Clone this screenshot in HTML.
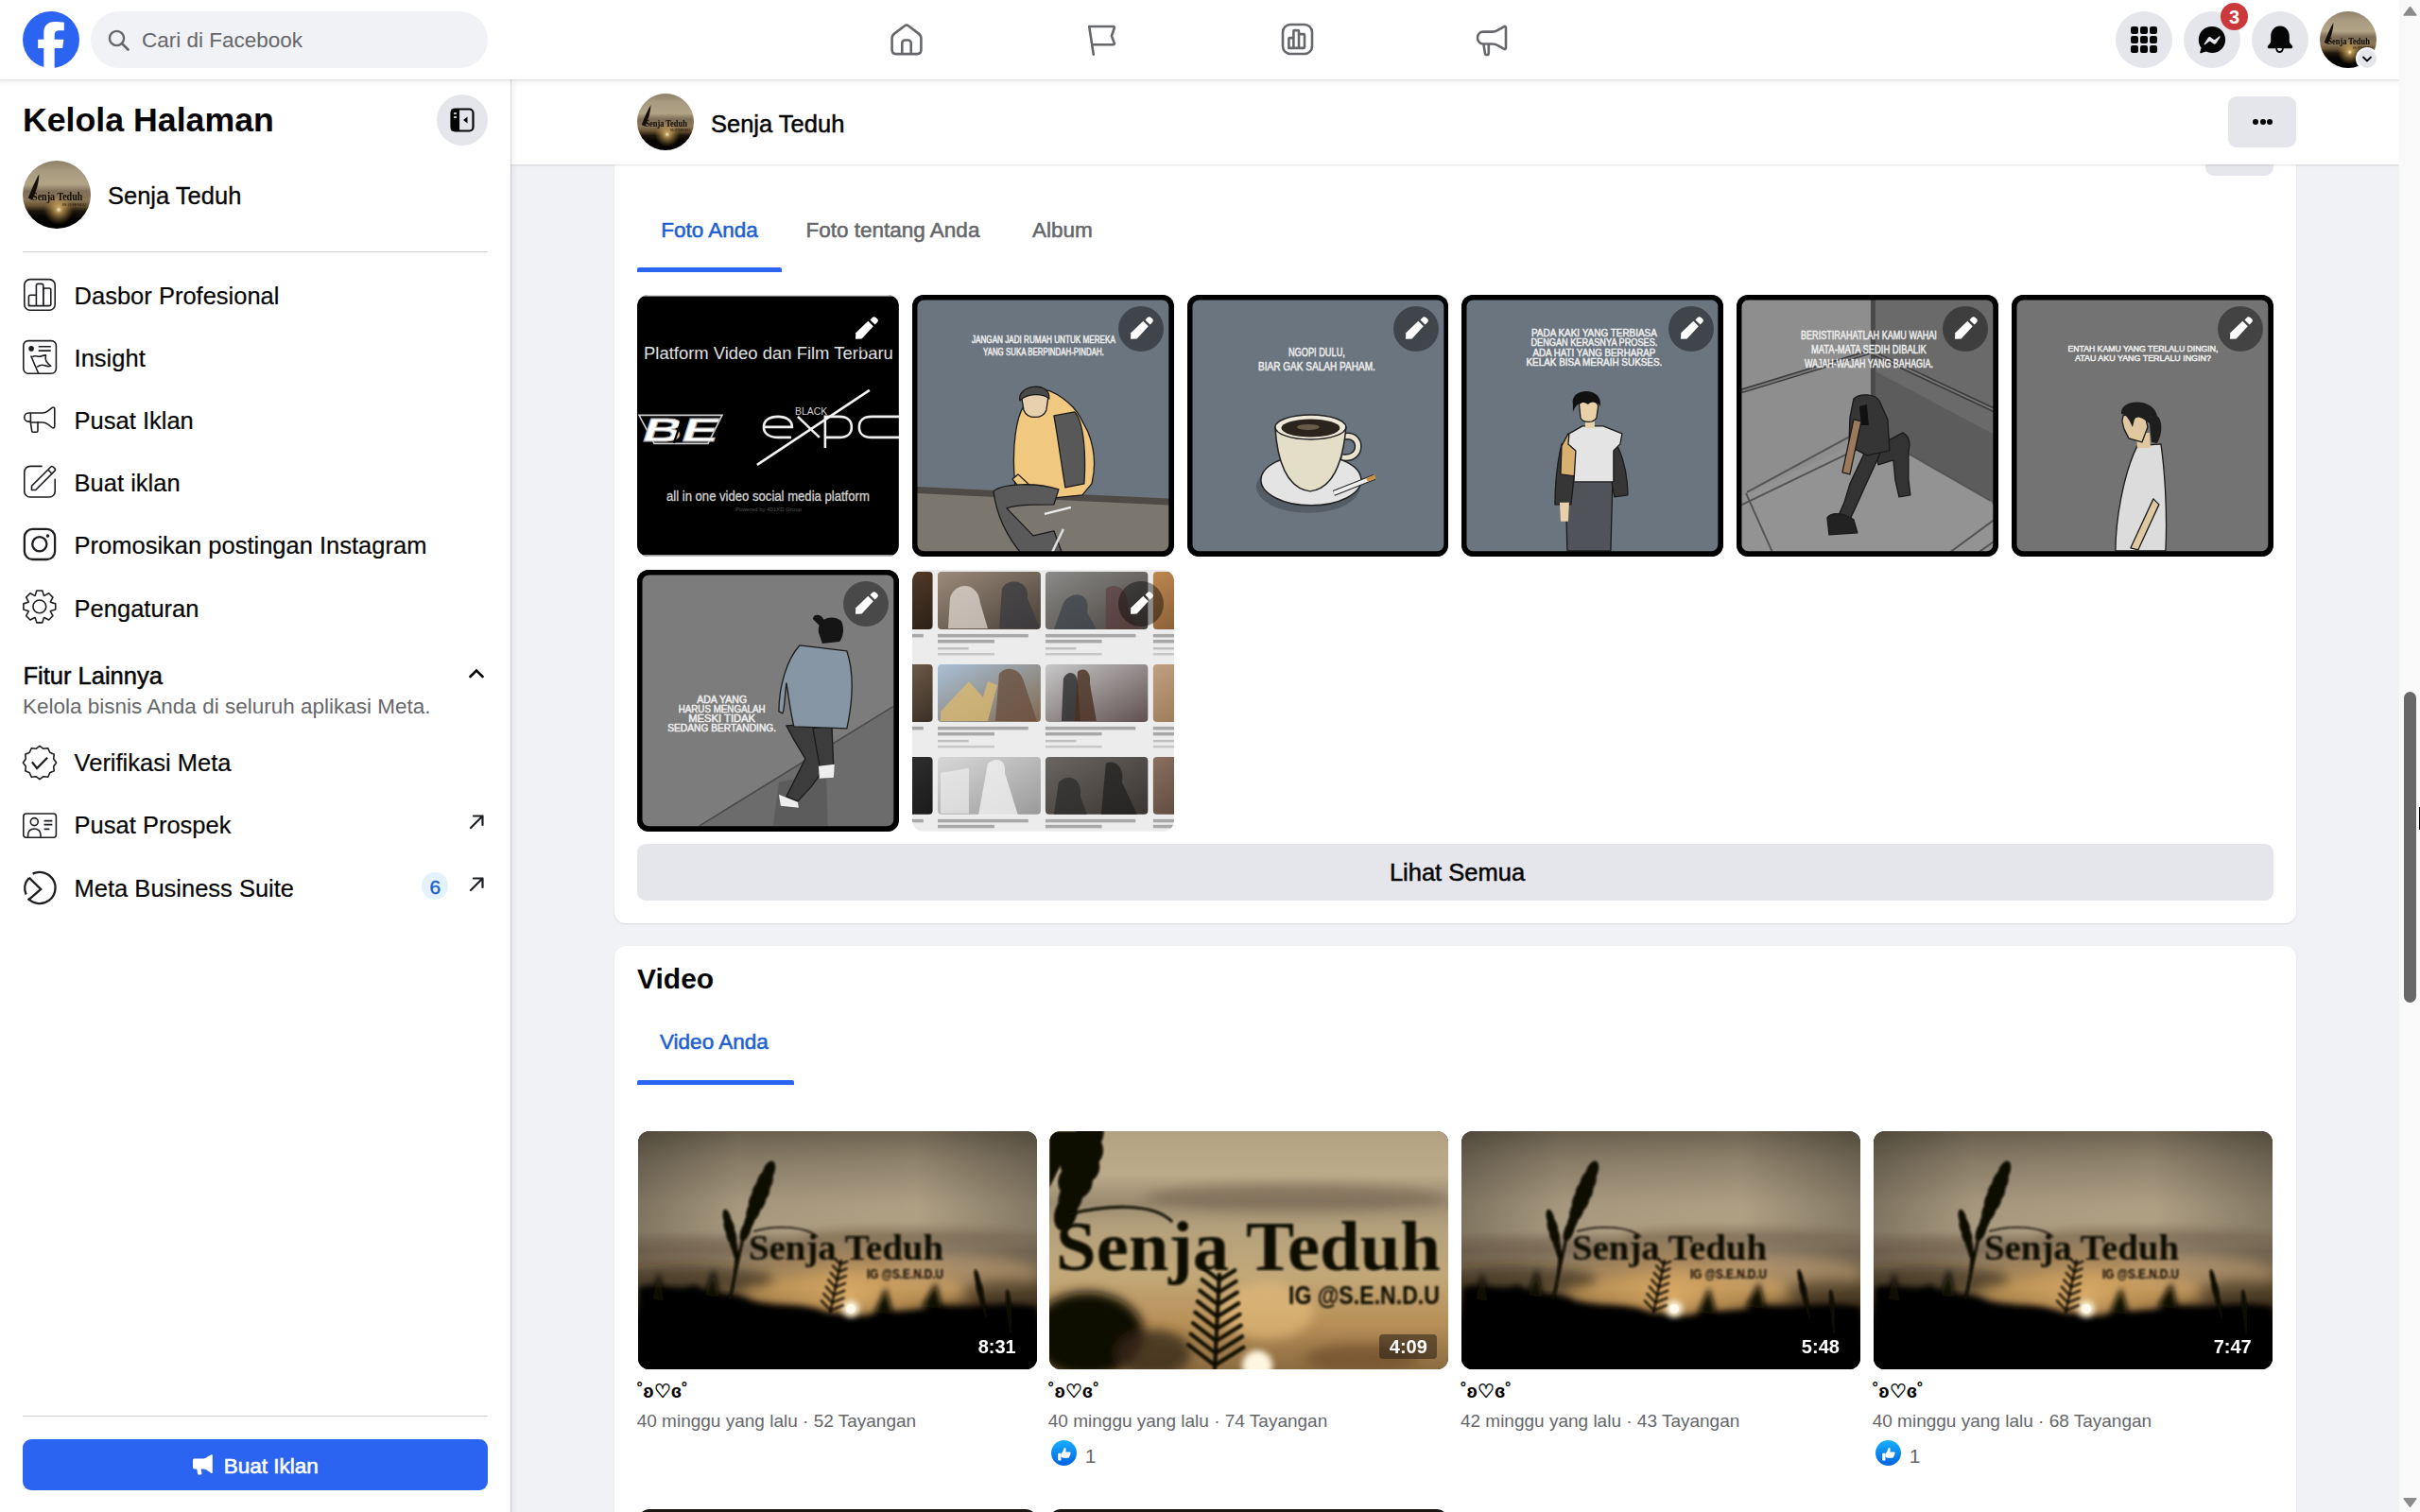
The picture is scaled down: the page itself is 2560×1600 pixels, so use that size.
<!DOCTYPE html><html><head><meta charset="utf-8"><title>Senja Teduh</title><style>
*{box-sizing:border-box;margin:0;padding:0}
html,body{width:2560px;height:1600px;overflow:hidden;background:#f0f2f5;font-family:"Liberation Sans",sans-serif;color:#050505}
.a{position:absolute}
.t{position:absolute;white-space:nowrap;line-height:1}
svg{position:absolute;overflow:visible}
</style></head><body>
<div class="a" style="left:650px;top:60px;width:1779px;height:917px;background:#fff;border-radius:12px;box-shadow:0 1px 2px rgba(0,0,0,.1)"></div>
<div class="a" style="left:650px;top:1001px;width:1779px;height:700px;background:#fff;border-radius:12px;box-shadow:0 1px 2px rgba(0,0,0,.1)"></div>
<div class="a" style="left:2333px;top:150px;width:72px;height:36px;border-radius:9px;background:#e4e6eb"></div>
<div class="t" style="left:699.20px;top:232.75px;font-size:22.5px;color:#1d5fd1;-webkit-text-stroke:0.55px #1d5fd1;">Foto Anda</div>
<div class="t" style="left:852.50px;top:232.75px;font-size:22.5px;color:#65676b;-webkit-text-stroke:0.55px #65676b;">Foto tentang Anda</div>
<div class="t" style="left:1092.00px;top:232.75px;font-size:22.5px;color:#65676b;-webkit-text-stroke:0.55px #65676b;">Album</div>
<div class="a" style="left:674px;top:283px;width:153px;height:5px;border-radius:2px 2px 0 0;background:#2c64f2"></div>
<div class="a" style="left:674.00px;top:312.30px;width:276.83px;height:276.83px;border-radius:12px;overflow:hidden"><svg style="left:0;top:0" width="276.83" height="276.83" viewBox="0 0 277 277"><rect width="277" height="277" fill="#000"/><rect x="0" y="0" width="277" height="1.5" fill="#ddd"/><rect x="0" y="275.5" width="277" height="1.5" fill="#ddd"/><text x="139" y="68" text-anchor="middle" font-family="Liberation Sans" font-size="17.5" fill="#e0e0e0" textLength="264" lengthAdjust="spacingAndGlyphs">Platform Video dan Film Terbaru</text><path d="M2 127.5 L90 127.5 L75 157.5 L18 157.5z" fill="none" stroke="#cfcfcf" stroke-width="1.6"/><text x="46" y="155" text-anchor="middle" font-family="Liberation Sans" font-weight="700" font-style="italic" font-size="36" fill="#fff" stroke="#aaa" stroke-width=".8" textLength="80" lengthAdjust="spacingAndGlyphs">BE</text><path d="M48 129 L39 157" stroke="#000" stroke-width="2.2"/><text x="167" y="127" font-family="Liberation Sans" font-size="10.5" fill="#cfcfcf">BLACK</text><g fill="none" stroke="#f0f0f0" stroke-width="2.6"><path d="M134 140 H164 C164 133 158 129 149 129 C140 129 134 133 134 140 C134 147 140 151 149 151 H163"/><path d="M170 129 L193 151"/><path d="M199 162 V129 H214 C222 129 227 133 227 140 C227 147 222 151 214 151 H199"/><path d="M290 129 H248 C240 129 235 133 235 140 C235 147 240 151 248 151 H290"/></g><path d="M127 180 L246 101" stroke="#f4f4f4" stroke-width="2.6"/><text x="138.5" y="218" text-anchor="middle" font-family="Liberation Sans" font-size="15" fill="#cfcfcf" stroke="#cfcfcf" stroke-width=".35" textLength="215" lengthAdjust="spacingAndGlyphs">all in one video social media platform</text><text x="139" y="229" text-anchor="middle" font-family="Liberation Sans" font-size="6" fill="#555">Powered by 401XD Group</text></svg><div class="a" style="right:10.8px;top:11.7px;width:48px;height:48px;border-radius:50%;background:rgba(0,0,0,.41)"><svg style="left:0;top:0" width="48" height="48" viewBox="0 0 48 48"><path d="M13 34.8L13.3 28.3 26.3 15.8 31.8 21.3 19.6 34.6z" fill="#fff"/><path d="M28.4 14.4L30.9 11.9C31.9 10.9 33.5 10.9 34.5 11.9L36.1 13.5C37.1 14.5 37.1 16.1 36.1 17.1L33.6 19.6z" fill="#fff"/></svg></div></div>
<div class="a" style="left:964.83px;top:312.30px;width:276.83px;height:276.83px;border-radius:12px;overflow:hidden"><svg style="left:0;top:0" width="276.83" height="276.83" viewBox="0 0 277 277"><rect width="277" height="277" fill="#6b7580"/><path d="M0 203 L277 216 L277 277 L0 277z" fill="#7b766e"/><path d="M0 203 L277 216 L277 223 L0 210z" fill="#4e4a46"/><text x="139" y="51.0" text-anchor="middle" font-family="Liberation Sans" font-weight="400" font-size="11" fill="#eeeeee" stroke="#eeeeee" stroke-width="0.5" textLength="152" lengthAdjust="spacingAndGlyphs">JANGAN JADI RUMAH UNTUK MEREKA</text><text x="139" y="64.5" text-anchor="middle" font-family="Liberation Sans" font-weight="400" font-size="11" fill="#eeeeee" stroke="#eeeeee" stroke-width="0.5" textLength="128" lengthAdjust="spacingAndGlyphs">YANG SUKA BERPINDAH-PINDAH.</text><path d="M118 118 C110 130 106 160 108 190 L110 215 L125 218 L138 210 L150 215 L180 212 L190 200 C195 180 192 160 186 145 L178 130 C170 115 150 100 135 100z" fill="#f0c880" stroke="#1a1a1a" stroke-width="1.3" stroke-linejoin="round"/><path d="M106 195 L120 212 L128 205 L112 190z" fill="#f0c880" stroke="#1a1a1a" stroke-width="1.3" stroke-linejoin="round"/><path d="M116 110 C116 96 140 92 144 108 L142 122 C138 132 122 132 118 122z" fill="#e6d0ae" stroke="#1a1a1a" stroke-width="1.3" stroke-linejoin="round"/><path d="M114 112 C110 96 146 90 145 110 C138 104 122 104 114 112z" fill="#4a4a4a" stroke="#1a1a1a" stroke-width="1.3" stroke-linejoin="round"/><path d="M150 128 L172 124 C182 135 184 170 182 200 L162 204 C158 180 154 150 150 128z" fill="#585858" stroke="#1a1a1a" stroke-width="1.3" stroke-linejoin="round"/><path d="M86 208 C95 200 130 198 155 206 L150 222 C130 222 110 222 100 226 L128 255 L150 250 L158 272 L140 277 L118 277 C105 262 90 240 86 208z" fill="#5a5a5a" stroke="#1a1a1a" stroke-width="1.3" stroke-linejoin="round"/><path d="M140 232 L168 225" stroke="#eee" stroke-width="2.5"/><path d="M146 277 L160 248" stroke="#ddd" stroke-width="2.5"/><rect x="2.5" y="2.5" width="272" height="272" rx="10" fill="none" stroke="#000" stroke-width="6"/></svg><div class="a" style="right:10.8px;top:11.7px;width:48px;height:48px;border-radius:50%;background:rgba(0,0,0,.41)"><svg style="left:0;top:0" width="48" height="48" viewBox="0 0 48 48"><path d="M13 34.8L13.3 28.3 26.3 15.8 31.8 21.3 19.6 34.6z" fill="#fff"/><path d="M28.4 14.4L30.9 11.9C31.9 10.9 33.5 10.9 34.5 11.9L36.1 13.5C37.1 14.5 37.1 16.1 36.1 17.1L33.6 19.6z" fill="#fff"/></svg></div></div>
<div class="a" style="left:1255.66px;top:312.30px;width:276.83px;height:276.83px;border-radius:12px;overflow:hidden"><svg style="left:0;top:0" width="276.83" height="276.83" viewBox="0 0 277 277"><rect width="277" height="277" fill="#6b7580"/><text x="137" y="65.0" text-anchor="middle" font-family="Liberation Sans" font-weight="400" font-size="12.5" fill="#eeeeee" stroke="#eeeeee" stroke-width="0.5" textLength="60" lengthAdjust="spacingAndGlyphs">NGOPI DULU,</text><text x="137" y="80.5" text-anchor="middle" font-family="Liberation Sans" font-weight="400" font-size="12.5" fill="#eeeeee" stroke="#eeeeee" stroke-width="0.5" textLength="124" lengthAdjust="spacingAndGlyphs">BIAR GAK SALAH PAHAM.</text><ellipse cx="128" cy="203" rx="55" ry="28" fill="#454c53" opacity=".6"/><ellipse cx="131" cy="196" rx="53" ry="27" fill="#e4e4e4" stroke="#222" stroke-width="1.5"/><path d="M166 150 C186 146 186 176 164 172" fill="none" stroke="#222" stroke-width="8"/><path d="M166 150 C186 146 186 176 164 172" fill="none" stroke="#e8e2d0" stroke-width="5"/><path d="M93 140 C95 175 105 205 130 208 C155 205 165 175 168 140z" fill="#e4ddc8" stroke="#222" stroke-width="1.5"/><ellipse cx="130.5" cy="140" rx="37.5" ry="13" fill="#efe9da" stroke="#222" stroke-width="1.5"/><ellipse cx="130.5" cy="141" rx="31" ry="9.5" fill="#2a241c"/><ellipse cx="128" cy="140" rx="12" ry="3" fill="#6a5a48"/><path d="M155 210 L198 193" stroke="#222" stroke-width="6"/><path d="M155 210 L198 193" stroke="#eee" stroke-width="4"/><path d="M190 196 L199 192.5" stroke="#c89040" stroke-width="4"/><rect x="2.5" y="2.5" width="272" height="272" rx="10" fill="none" stroke="#000" stroke-width="6"/></svg><div class="a" style="right:10.8px;top:11.7px;width:48px;height:48px;border-radius:50%;background:rgba(0,0,0,.41)"><svg style="left:0;top:0" width="48" height="48" viewBox="0 0 48 48"><path d="M13 34.8L13.3 28.3 26.3 15.8 31.8 21.3 19.6 34.6z" fill="#fff"/><path d="M28.4 14.4L30.9 11.9C31.9 10.9 33.5 10.9 34.5 11.9L36.1 13.5C37.1 14.5 37.1 16.1 36.1 17.1L33.6 19.6z" fill="#fff"/></svg></div></div>
<div class="a" style="left:1546.49px;top:312.30px;width:276.83px;height:276.83px;border-radius:12px;overflow:hidden"><svg style="left:0;top:0" width="276.83" height="276.83" viewBox="0 0 277 277"><rect width="277" height="277" fill="#6b7580"/><text x="140.5" y="44.0" text-anchor="middle" font-family="Liberation Sans" font-weight="400" font-size="10.5" fill="#eeeeee" stroke="#eeeeee" stroke-width="0.5" textLength="133" lengthAdjust="spacingAndGlyphs">PADA KAKI YANG TERBIASA</text><text x="140.5" y="54.5" text-anchor="middle" font-family="Liberation Sans" font-weight="400" font-size="10.5" fill="#eeeeee" stroke="#eeeeee" stroke-width="0.5" textLength="134" lengthAdjust="spacingAndGlyphs">DENGAN KERASNYA PROSES.</text><text x="140.5" y="65.0" text-anchor="middle" font-family="Liberation Sans" font-weight="400" font-size="10.5" fill="#eeeeee" stroke="#eeeeee" stroke-width="0.5" textLength="130" lengthAdjust="spacingAndGlyphs">ADA HATI YANG BERHARAP</text><text x="140.5" y="75.5" text-anchor="middle" font-family="Liberation Sans" font-weight="400" font-size="10.5" fill="#eeeeee" stroke="#eeeeee" stroke-width="0.5" textLength="144" lengthAdjust="spacingAndGlyphs">KELAK BISA MERAIH SUKSES.</text><path d="M110 196 L160 196 L158 271 L112 271z" fill="#50545a" stroke="#1a1a1a" stroke-width="1.3" stroke-linejoin="round"/><path d="M106 158 C102 175 99 200 99 222 L116 222 C118 205 120 185 121 165z" fill="#363636" stroke="#1a1a1a" stroke-width="1.3" stroke-linejoin="round"/><path d="M106 160 L113 147 L122 160 L120 192 L105 190z" fill="#d8b070" stroke="#1a1a1a" stroke-width="1.3" stroke-linejoin="round"/><path d="M157 148 C168 160 176 185 176 212 L162 214 C158 195 156 175 152 160z" fill="#363636" stroke="#1a1a1a" stroke-width="1.3" stroke-linejoin="round"/><path d="M114 147 L128 139 L150 139 L170 147 L168 158 L161 165 L161 198 L119 198 L121 165 L113 158z" fill="#e4e4e4" stroke="#1a1a1a" stroke-width="1.3" stroke-linejoin="round"/><path d="M131 132 L141 132 L141 141 L131 141z" fill="#e8d0a8"/><path d="M124.6 116 C124.6 112 144.7 110 144.7 118 L143 130 C140 136 128 136 126 130z" fill="#e8d0a8" stroke="#1a1a1a" stroke-width="1.3" stroke-linejoin="round"/><path d="M118 116 C114 98 150 96 147 118 C144 112 138 112 134 116 C128 112 122 114 118 124z" fill="#111"/><path d="M104 220 L114 220 L113 240 L105 240z" fill="#e8d0a8"/><rect x="2.5" y="2.5" width="272" height="272" rx="10" fill="none" stroke="#000" stroke-width="6"/></svg><div class="a" style="right:10.8px;top:11.7px;width:48px;height:48px;border-radius:50%;background:rgba(0,0,0,.41)"><svg style="left:0;top:0" width="48" height="48" viewBox="0 0 48 48"><path d="M13 34.8L13.3 28.3 26.3 15.8 31.8 21.3 19.6 34.6z" fill="#fff"/><path d="M28.4 14.4L30.9 11.9C31.9 10.9 33.5 10.9 34.5 11.9L36.1 13.5C37.1 14.5 37.1 16.1 36.1 17.1L33.6 19.6z" fill="#fff"/></svg></div></div>
<div class="a" style="left:1837.32px;top:312.30px;width:276.83px;height:276.83px;border-radius:12px;overflow:hidden"><svg style="left:0;top:0" width="276.83" height="276.83" viewBox="0 0 277 277"><rect width="277" height="277" fill="#8e8e8e"/><path d="M145 0 L277 0 L277 277 L145 277z" fill="#6a6a6a"/><path d="M145 80 L277 150 L277 230 L200 200 L150 150z" fill="#5c5c5c"/><path d="M0 216 L143 149 L154 152 L269 218 L277 232 L277 277 L0 277z" fill="#939393"/><path d="M11 209 L120 150 M0 225 L143 156 M154 152 L269 218 M10 210 L40 277 M220 277 L277 235 M250 277 L277 258" fill="none" stroke="#555" stroke-width="2"/><rect x="142" y="0" width="5" height="155" fill="#4a4a4a"/><path d="M5 102 L143 60 M145 62 L277 124" stroke="#3a3a3a" stroke-width="5"/><path d="M5 102 L143 60 M145 62 L277 124" stroke="#777" stroke-width="2"/><text x="140" y="47" text-anchor="middle" font-family="Liberation Sans" font-weight="400" font-size="12" fill="#eeeeee" stroke="#eeeeee" stroke-width="0.5" textLength="144" lengthAdjust="spacingAndGlyphs">BERISTIRAHATLAH KAMU WAHAI</text><text x="140" y="62" text-anchor="middle" font-family="Liberation Sans" font-weight="400" font-size="12" fill="#eeeeee" stroke="#eeeeee" stroke-width="0.5" textLength="122" lengthAdjust="spacingAndGlyphs">MATA-MATA SEDIH DIBALIK</text><text x="140" y="77" text-anchor="middle" font-family="Liberation Sans" font-weight="400" font-size="12" fill="#eeeeee" stroke="#eeeeee" stroke-width="0.5" textLength="136" lengthAdjust="spacingAndGlyphs">WAJAH-WAJAH YANG BAHAGIA.</text><path d="M146 162 L176 146 C184 150 184 158 182 166 L182 195 L184 212 L172 214 L168 196 L166 175 L150 180z" fill="#333" stroke="#1a1a1a" stroke-width="1.3" stroke-linejoin="round"/><path d="M138 162 L152 168 L135 205 L126 225 L118 242 L106 238 L114 220 L120 200z" fill="#333" stroke="#1a1a1a" stroke-width="1.3" stroke-linejoin="round"/><path d="M96 236 C100 230 112 230 124 238 L128 252 L98 254z" fill="#222" stroke="#1a1a1a" stroke-width="1.3" stroke-linejoin="round"/><path d="M124 110 C130 104 148 104 152 114 L160 132 L162 165 L138 170 L119 160 L120 130z" fill="#353535" stroke="#1a1a1a" stroke-width="1.3" stroke-linejoin="round"/><path d="M130 118 L138 116 L140 138 L132 138z" fill="#111"/><path d="M124 132 L132 134 L120 190 L112 188z" fill="#9a7a58" stroke="#1a1a1a" stroke-width="1.3" stroke-linejoin="round"/><rect x="2.5" y="2.5" width="272" height="272" rx="10" fill="none" stroke="#000" stroke-width="6"/></svg><div class="a" style="right:10.8px;top:11.7px;width:48px;height:48px;border-radius:50%;background:rgba(0,0,0,.41)"><svg style="left:0;top:0" width="48" height="48" viewBox="0 0 48 48"><path d="M13 34.8L13.3 28.3 26.3 15.8 31.8 21.3 19.6 34.6z" fill="#fff"/><path d="M28.4 14.4L30.9 11.9C31.9 10.9 33.5 10.9 34.5 11.9L36.1 13.5C37.1 14.5 37.1 16.1 36.1 17.1L33.6 19.6z" fill="#fff"/></svg></div></div>
<div class="a" style="left:2128.15px;top:312.30px;width:276.83px;height:276.83px;border-radius:12px;overflow:hidden"><svg style="left:0;top:0" width="276.83" height="276.83" viewBox="0 0 277 277"><rect width="277" height="277" fill="#737373"/><text x="139" y="60" text-anchor="middle" font-family="Liberation Sans" font-weight="400" font-size="9.5" fill="#eeeeee" stroke="#eeeeee" stroke-width="0.5" textLength="159" lengthAdjust="spacingAndGlyphs">ENTAH KAMU YANG TERLALU DINGIN,</text><text x="139" y="70" text-anchor="middle" font-family="Liberation Sans" font-weight="400" font-size="9.5" fill="#eeeeee" stroke="#eeeeee" stroke-width="0.5" textLength="144" lengthAdjust="spacingAndGlyphs">ATAU AKU YANG TERLALU INGIN?</text><path d="M133 160 L158 158 C162 185 165 230 163 271 L110 271 C110 240 118 190 133 160z" fill="#dcdcdc" stroke="#1a1a1a" stroke-width="1.3" stroke-linejoin="round"/><path d="M150 216 L156 222 L134 270 L126 268z" fill="#e0c8a0" stroke="#1a1a1a" stroke-width="1.3" stroke-linejoin="round"/><path d="M132 146 L146 146 L147 162 L133 162z" fill="#e0c8a0"/><path d="M118 128 L117 134 L119 142 L124 152 L138 156 L144 140 L140 122z" fill="#e0c8a0" stroke="#1a1a1a" stroke-width="1.3" stroke-linejoin="round"/><path d="M116 126 C114 110 150 108 154 128 C160 132 160 148 154 157 L148 156 L146 136 C140 132 134 126 130 132 L128 140 C124 130 120 126 116 126z" fill="#1e1e1e"/><rect x="2.5" y="2.5" width="272" height="272" rx="10" fill="none" stroke="#000" stroke-width="6"/></svg><div class="a" style="right:10.8px;top:11.7px;width:48px;height:48px;border-radius:50%;background:rgba(0,0,0,.41)"><svg style="left:0;top:0" width="48" height="48" viewBox="0 0 48 48"><path d="M13 34.8L13.3 28.3 26.3 15.8 31.8 21.3 19.6 34.6z" fill="#fff"/><path d="M28.4 14.4L30.9 11.9C31.9 10.9 33.5 10.9 34.5 11.9L36.1 13.5C37.1 14.5 37.1 16.1 36.1 17.1L33.6 19.6z" fill="#fff"/></svg></div></div>
<div class="a" style="left:674.00px;top:603.13px;width:276.83px;height:276.83px;border-radius:12px;overflow:hidden"><svg style="left:0;top:0" width="276.83" height="276.83" viewBox="0 0 277 277"><rect width="277" height="277" fill="#7c7c7c"/><path d="M66 271 L271 144.7 L277 277 L60 277z" fill="#6c6c6c"/><path d="M66 271 L271 144.7" stroke="#4a4a4a" stroke-width="1.5"/><path d="M144 271 L150 225 L200 215 L202 271z" fill="#5c5c5c"/><path d="M158 165 L204 162 L202 205 L184 230 L170 245 L158 240 L178 200 L166 180z" fill="#3c3c3c" stroke="#1a1a1a" stroke-width="1.3" stroke-linejoin="round"/><path d="M186 168 L206 164 L208 210 L194 212 L190 190z" fill="#3c3c3c" stroke="#1a1a1a" stroke-width="1.3" stroke-linejoin="round"/><path d="M150 238 L170 246 L171 252 L152 250z" fill="#eee"/><path d="M192 208 L209 206 L208 220 L193 221z" fill="#eee"/><path d="M172 80 L222 86 C230 110 228 140 222 168 L166 166 C162 150 160 130 158 120 C156 135 156 148 154 152 L150 150 C150 125 158 95 172 80z" fill="#8696a4" stroke="#1a1a1a" stroke-width="1.3" stroke-linejoin="round"/><path d="M192 66 C190 52 206 46 216 54 C220 62 218 72 214 76 L196 78z" fill="#151515"/><path d="M186 52 C186 46 196 46 198 54 L194 60z" fill="#151515"/><text x="89.7" y="141" text-anchor="middle" font-family="Liberation Sans" font-weight="400" font-size="10" fill="#eeeeee" stroke="#eeeeee" stroke-width="0.5" textLength="53" lengthAdjust="spacingAndGlyphs">ADA YANG</text><text x="89.7" y="151" text-anchor="middle" font-family="Liberation Sans" font-weight="400" font-size="10" fill="#eeeeee" stroke="#eeeeee" stroke-width="0.5" textLength="92" lengthAdjust="spacingAndGlyphs">HARUS MENGALAH</text><text x="89.7" y="161" text-anchor="middle" font-family="Liberation Sans" font-weight="400" font-size="10" fill="#eeeeee" stroke="#eeeeee" stroke-width="0.5" textLength="71" lengthAdjust="spacingAndGlyphs">MESKI TIDAK</text><text x="89.7" y="171" text-anchor="middle" font-family="Liberation Sans" font-weight="400" font-size="10" fill="#eeeeee" stroke="#eeeeee" stroke-width="0.5" textLength="115" lengthAdjust="spacingAndGlyphs">SEDANG BERTANDING.</text><rect x="2.5" y="2.5" width="272" height="272" rx="10" fill="none" stroke="#000" stroke-width="6"/></svg><div class="a" style="right:10.8px;top:11.7px;width:48px;height:48px;border-radius:50%;background:rgba(0,0,0,.41)"><svg style="left:0;top:0" width="48" height="48" viewBox="0 0 48 48"><path d="M13 34.8L13.3 28.3 26.3 15.8 31.8 21.3 19.6 34.6z" fill="#fff"/><path d="M28.4 14.4L30.9 11.9C31.9 10.9 33.5 10.9 34.5 11.9L36.1 13.5C37.1 14.5 37.1 16.1 36.1 17.1L33.6 19.6z" fill="#fff"/></svg></div></div>
<div class="a" style="left:964.83px;top:603.13px;width:276.83px;height:276.83px;border-radius:12px;overflow:hidden"><svg style="left:0;top:0" width="276.83" height="276.83" viewBox="0 0 277 277"><rect width="277" height="277" fill="#ececec"/><defs><linearGradient id="p8g0" x1="0" y1="0" x2="1" y2="1"><stop offset="0" stop-color="#6a4a30"/><stop offset="1" stop-color="#2a2018"/></linearGradient><linearGradient id="p8g1" x1="0" y1="0" x2="1" y2="1"><stop offset="0" stop-color="#9a8a7a"/><stop offset="1" stop-color="#4a4038"/></linearGradient><linearGradient id="p8g2" x1="0" y1="0" x2="1" y2="1"><stop offset="0" stop-color="#8a8a88"/><stop offset="1" stop-color="#4a4440"/></linearGradient><linearGradient id="p8g3" x1="0" y1="0" x2="1" y2="1"><stop offset="0" stop-color="#c08850"/><stop offset="1" stop-color="#6a4a2a"/></linearGradient><linearGradient id="p8g4" x1="0" y1="0" x2="1" y2="1"><stop offset="0" stop-color="#8a7058"/><stop offset="1" stop-color="#3a3028"/></linearGradient><linearGradient id="p8g5" x1="0" y1="0" x2="1" y2="1"><stop offset="0" stop-color="#a8c0d8"/><stop offset="1" stop-color="#806a50"/></linearGradient><linearGradient id="p8g6" x1="0" y1="0" x2="1" y2="1"><stop offset="0" stop-color="#c8c8c8"/><stop offset="1" stop-color="#605050"/></linearGradient><linearGradient id="p8g7" x1="0" y1="0" x2="1" y2="1"><stop offset="0" stop-color="#c0a080"/><stop offset="1" stop-color="#8a6a48"/></linearGradient><linearGradient id="p8g8" x1="0" y1="0" x2="1" y2="1"><stop offset="0" stop-color="#3a3a3a"/><stop offset="1" stop-color="#1a1a1a"/></linearGradient><linearGradient id="p8g9" x1="0" y1="0" x2="1" y2="1"><stop offset="0" stop-color="#d8d8d8"/><stop offset="1" stop-color="#9a9a9a"/></linearGradient><linearGradient id="p8g10" x1="0" y1="0" x2="1" y2="1"><stop offset="0" stop-color="#6a6560"/><stop offset="1" stop-color="#3a3530"/></linearGradient><linearGradient id="p8g11" x1="0" y1="0" x2="1" y2="1"><stop offset="0" stop-color="#8a7060"/><stop offset="1" stop-color="#4a3a30"/></linearGradient></defs><rect x="-60" y="2" width="81.6" height="61" rx="4" fill="url(#p8g0)"/><rect x="-60" y="68" width="71.8" height="3.5" fill="#a8a8a8"/><rect x="-60" y="74" width="44.9" height="3.5" fill="#a8a8a8"/><rect x="-60" y="82" width="24.5" height="2.5" fill="#c0c0c0"/><rect x="-60" y="88" width="44.9" height="2.5" fill="#c8c8c8"/><rect x="27" y="2" width="109" height="61" rx="4" fill="url(#p8g1)"/><rect x="27" y="68" width="95.9" height="3.5" fill="#a8a8a8"/><rect x="27" y="74" width="60.0" height="3.5" fill="#a8a8a8"/><rect x="27" y="82" width="32.7" height="2.5" fill="#c0c0c0"/><rect x="27" y="88" width="60.0" height="2.5" fill="#c8c8c8"/><rect x="141" y="2" width="108.5" height="61" rx="4" fill="url(#p8g2)"/><rect x="141" y="68" width="95.5" height="3.5" fill="#a8a8a8"/><rect x="141" y="74" width="59.7" height="3.5" fill="#a8a8a8"/><rect x="141" y="82" width="32.5" height="2.5" fill="#c0c0c0"/><rect x="141" y="88" width="59.7" height="2.5" fill="#c8c8c8"/><rect x="255" y="2" width="80" height="61" rx="4" fill="url(#p8g3)"/><rect x="255" y="68" width="70.4" height="3.5" fill="#a8a8a8"/><rect x="255" y="74" width="44.0" height="3.5" fill="#a8a8a8"/><rect x="255" y="82" width="24.0" height="2.5" fill="#c0c0c0"/><rect x="255" y="88" width="44.0" height="2.5" fill="#c8c8c8"/><rect x="-60" y="100" width="81.6" height="61" rx="4" fill="url(#p8g4)"/><rect x="-60" y="166" width="71.8" height="3.5" fill="#a8a8a8"/><rect x="-60" y="172" width="44.9" height="3.5" fill="#a8a8a8"/><rect x="-60" y="180" width="24.5" height="2.5" fill="#c0c0c0"/><rect x="-60" y="186" width="44.9" height="2.5" fill="#c8c8c8"/><rect x="27" y="100" width="109" height="61" rx="4" fill="url(#p8g5)"/><rect x="27" y="166" width="95.9" height="3.5" fill="#a8a8a8"/><rect x="27" y="172" width="60.0" height="3.5" fill="#a8a8a8"/><rect x="27" y="180" width="32.7" height="2.5" fill="#c0c0c0"/><rect x="27" y="186" width="60.0" height="2.5" fill="#c8c8c8"/><rect x="141" y="100" width="108.5" height="61" rx="4" fill="url(#p8g6)"/><rect x="141" y="166" width="95.5" height="3.5" fill="#a8a8a8"/><rect x="141" y="172" width="59.7" height="3.5" fill="#a8a8a8"/><rect x="141" y="180" width="32.5" height="2.5" fill="#c0c0c0"/><rect x="141" y="186" width="59.7" height="2.5" fill="#c8c8c8"/><rect x="255" y="100" width="80" height="61" rx="4" fill="url(#p8g7)"/><rect x="255" y="166" width="70.4" height="3.5" fill="#a8a8a8"/><rect x="255" y="172" width="44.0" height="3.5" fill="#a8a8a8"/><rect x="255" y="180" width="24.0" height="2.5" fill="#c0c0c0"/><rect x="255" y="186" width="44.0" height="2.5" fill="#c8c8c8"/><rect x="-60" y="198" width="81.6" height="61" rx="4" fill="url(#p8g8)"/><rect x="-60" y="264" width="71.8" height="3.5" fill="#a8a8a8"/><rect x="-60" y="270" width="44.9" height="3.5" fill="#a8a8a8"/><rect x="-60" y="278" width="24.5" height="2.5" fill="#c0c0c0"/><rect x="-60" y="284" width="44.9" height="2.5" fill="#c8c8c8"/><rect x="27" y="198" width="109" height="61" rx="4" fill="url(#p8g9)"/><rect x="27" y="264" width="95.9" height="3.5" fill="#a8a8a8"/><rect x="27" y="270" width="60.0" height="3.5" fill="#a8a8a8"/><rect x="27" y="278" width="32.7" height="2.5" fill="#c0c0c0"/><rect x="27" y="284" width="60.0" height="2.5" fill="#c8c8c8"/><rect x="141" y="198" width="108.5" height="61" rx="4" fill="url(#p8g10)"/><rect x="141" y="264" width="95.5" height="3.5" fill="#a8a8a8"/><rect x="141" y="270" width="59.7" height="3.5" fill="#a8a8a8"/><rect x="141" y="278" width="32.5" height="2.5" fill="#c0c0c0"/><rect x="141" y="284" width="59.7" height="2.5" fill="#c8c8c8"/><rect x="255" y="198" width="80" height="61" rx="4" fill="url(#p8g11)"/><rect x="255" y="264" width="70.4" height="3.5" fill="#a8a8a8"/><rect x="255" y="270" width="44.0" height="3.5" fill="#a8a8a8"/><rect x="255" y="278" width="24.0" height="2.5" fill="#c0c0c0"/><rect x="255" y="284" width="44.0" height="2.5" fill="#c8c8c8"/><path d="M40 30 C45 12 70 12 72 35 L80 62 L38 62z" fill="#e8e0d8" opacity=".7"/><path d="M95 20 C100 8 125 10 122 30 L135 62 L92 62z" fill="#3a3a40" opacity=".75"/><path d="M160 35 C170 20 190 25 185 45 L195 63 L150 63z" fill="#3a4048" opacity=".7"/><path d="M205 20 C215 12 230 20 228 40 L240 63 L205 63z" fill="#5a3a38" opacity=".6"/><path d="M30 150 L60 118 L75 135 L80 118 L90 122 L80 160 L30 160z" fill="#d8b870" opacity=".8"/><path d="M92 110 C100 100 115 105 118 118 L132 160 L88 160z" fill="#6a5040" opacity=".8"/><path d="M160 115 C165 105 175 108 175 120 L178 160 L158 160z" fill="#2a2a2a" opacity=".8"/><path d="M175 108 C182 102 190 108 188 120 L195 160 L172 160z" fill="#4a3020" opacity=".8"/><path d="M80 205 C88 198 100 200 98 215 L112 260 L70 260z" fill="#f0f0f0" opacity=".8"/><path d="M30 215 L60 210 L60 258 L30 258z" fill="#f4f4f4" opacity=".6"/><path d="M155 225 C165 215 180 220 178 240 L185 259 L150 259z" fill="#2a2a2a" opacity=".7"/><path d="M205 205 C215 200 225 210 222 225 L238 259 L200 259z" fill="#1e1e1e" opacity=".7"/></svg><div class="a" style="right:10.8px;top:11.7px;width:48px;height:48px;border-radius:50%;background:rgba(0,0,0,.41)"><svg style="left:0;top:0" width="48" height="48" viewBox="0 0 48 48"><path d="M13 34.8L13.3 28.3 26.3 15.8 31.8 21.3 19.6 34.6z" fill="#fff"/><path d="M28.4 14.4L30.9 11.9C31.9 10.9 33.5 10.9 34.5 11.9L36.1 13.5C37.1 14.5 37.1 16.1 36.1 17.1L33.6 19.6z" fill="#fff"/></svg></div></div>
<div class="a" style="left:674px;top:893px;width:1731px;height:60px;border-radius:9px;background:#e4e6eb"></div>
<div class="t" style="left:1469.90px;top:911.11px;font-size:25.5px;color:#050505;-webkit-text-stroke:0.5px #050505;">Lihat Semua</div>
<div class="t" style="left:674.00px;top:1021.40px;font-size:30px;color:#050505;font-weight:700;">Video</div>
<div class="t" style="left:698.00px;top:1092.25px;font-size:22.5px;color:#1d5fd1;-webkit-text-stroke:0.55px #1d5fd1;">Video Anda</div>
<div class="a" style="left:674px;top:1143px;width:166px;height:5px;border-radius:2px 2px 0 0;background:#2c64f2"></div>
<div class="a" style="left:674.7px;top:1196.7px;width:422px;height:252.7px;border-radius:12px;overflow:hidden;background:#000"><svg style="left:0;top:0" width="422" height="253" viewBox="0 0 422 253"><defs><filter id="v0f" x="-20%" y="-50%" width="140%" height="200%"><feGaussianBlur stdDeviation="6"/></filter><filter id="v0g" x="-50%" y="-50%" width="200%" height="200%"><feGaussianBlur stdDeviation="3.2"/></filter><filter id="v0h" x="-50%" y="-50%" width="200%" height="200%"><feGaussianBlur stdDeviation="1"/></filter><linearGradient id="v0a" x1="0" y1="0" x2="0" y2="1"><stop offset="0" stop-color="#6e6451"/><stop offset=".12" stop-color="#8e816b"/><stop offset=".3" stop-color="#ad9e83"/><stop offset=".42" stop-color="#b2a386"/><stop offset=".5" stop-color="#93826a"/><stop offset=".58" stop-color="#a48c68"/><stop offset=".66" stop-color="#9a7e52"/><stop offset=".72" stop-color="#5a4428"/><stop offset=".79" stop-color="#140f09"/><stop offset=".86" stop-color="#040302"/><stop offset="1" stop-color="#000"/></linearGradient><linearGradient id="v0c" x1="0" y1="0" x2="1" y2="0"><stop offset="0" stop-color="#000" stop-opacity=".28"/><stop offset=".25" stop-color="#000" stop-opacity=".05"/><stop offset=".7" stop-color="#000" stop-opacity="0"/><stop offset="1" stop-color="#000" stop-opacity=".25"/></linearGradient><radialGradient id="v0b" cx=".53" cy=".68" r=".3"><stop offset="0" stop-color="#e8b870" stop-opacity=".85"/><stop offset=".5" stop-color="#b88a50" stop-opacity=".45"/><stop offset="1" stop-color="#a87a3a" stop-opacity="0"/></radialGradient></defs><rect width="422" height="253" fill="url(#v0a)"/><rect width="422" height="253" fill="url(#v0b)"/><rect width="422" height="253" fill="url(#v0c)"/><g filter="url(#v0f)"><ellipse cx="300" cy="112" rx="130" ry="9" fill="#6e5e4a" opacity=".6"/><ellipse cx="90" cy="122" rx="110" ry="10" fill="#6e5e4a" opacity=".5"/></g><g filter="url(#v0f)"><ellipse cx="235" cy="170" rx="120" ry="20" fill="#d8a860" opacity=".55"/><ellipse cx="340" cy="150" rx="80" ry="18" fill="#c8a478" opacity=".35"/><ellipse cx="60" cy="158" rx="85" ry="16" fill="#2a2016" opacity=".55"/><ellipse cx="390" cy="170" rx="50" ry="14" fill="#2a2016" opacity=".45"/></g><g filter="url(#v0g)"><path d="M0 165 C20 158 40 170 60 162 C80 175 100 168 120 180 C150 188 170 180 200 192 L240 196 C260 188 290 194 320 184 C350 190 380 178 422 186 L422 253 L0 253z" fill="#050403"/><path d="M15 178 L22 148 L28 180z M70 174 L80 145 L86 176z M250 192 L262 165 L270 194z M300 186 L315 160 L322 188z" fill="#0a0806"/></g><g filter="url(#v0g)"><circle cx="225" cy="188" r="9" fill="#fff4d8"/></g><circle cx="225" cy="188" r="5" fill="#fffaf0" opacity=".9"/><g filter="url(#v0h)"><ellipse cx="138.0" cy="43.1" rx="6.1" ry="12.1" transform="rotate(21.3 138.0 43.1)" fill="#0a0806" opacity="1"/><ellipse cx="134.0" cy="53.4" rx="8.1" ry="12.1" transform="rotate(21.3 134.0 53.4)" fill="#0a0806" opacity="1"/><ellipse cx="130.0" cy="63.7" rx="9.0" ry="12.1" transform="rotate(21.3 130.0 63.7)" fill="#0a0806" opacity="1"/><ellipse cx="126.0" cy="74.0" rx="8.6" ry="12.1" transform="rotate(21.3 126.0 74.0)" fill="#0a0806" opacity="1"/><ellipse cx="122.0" cy="84.3" rx="6.9" ry="12.1" transform="rotate(21.3 122.0 84.3)" fill="#0a0806" opacity="1"/><ellipse cx="118.0" cy="94.6" rx="5.0" ry="12.1" transform="rotate(21.3 118.0 94.6)" fill="#0a0806" opacity="1"/><ellipse cx="114.0" cy="104.9" rx="5.0" ry="12.1" transform="rotate(21.3 114.0 104.9)" fill="#0a0806" opacity="1"/><ellipse cx="94.1" cy="92.4" rx="4.0" ry="10.0" transform="rotate(-14.0 94.1 92.4)" fill="#0a0806" opacity="1"/><ellipse cx="96.3" cy="101.2" rx="5.4" ry="10.0" transform="rotate(-14.0 96.3 101.2)" fill="#0a0806" opacity="1"/><ellipse cx="98.5" cy="110.0" rx="5.2" ry="10.0" transform="rotate(-14.0 98.5 110.0)" fill="#0a0806" opacity="1"/><ellipse cx="100.7" cy="118.8" rx="3.7" ry="10.0" transform="rotate(-14.0 100.7 118.8)" fill="#0a0806" opacity="1"/><ellipse cx="102.9" cy="127.6" rx="3.0" ry="10.0" transform="rotate(-14.0 102.9 127.6)" fill="#0a0806" opacity="1"/><path d="M112 108 L97 178" stroke="#0a0806" stroke-width="3"/><path d="M104 130 L100 170" stroke="#0a0806" stroke-width="2"/><path d="M215.0 136.0 L203.0 193.0" stroke="#0a0806" stroke-width="2.2"/><path d="M214.0 140.9 L208.5 135.1" stroke="#0a0806" stroke-width="2.2" stroke-linecap="round"/><path d="M214.0 140.9 L221.3 137.8" stroke="#0a0806" stroke-width="2.2" stroke-linecap="round"/><path d="M212.3 149.0 L206.1 142.5" stroke="#0a0806" stroke-width="2.2" stroke-linecap="round"/><path d="M212.3 149.0 L220.5 145.5" stroke="#0a0806" stroke-width="2.2" stroke-linecap="round"/><path d="M210.5 157.2 L203.7 149.8" stroke="#0a0806" stroke-width="2.2" stroke-linecap="round"/><path d="M210.5 157.2 L219.8 153.2" stroke="#0a0806" stroke-width="2.2" stroke-linecap="round"/><path d="M208.8 165.3 L201.2 157.2" stroke="#0a0806" stroke-width="2.2" stroke-linecap="round"/><path d="M208.8 165.3 L219.0 161.0" stroke="#0a0806" stroke-width="2.2" stroke-linecap="round"/><path d="M207.1 173.5 L198.8 164.6" stroke="#0a0806" stroke-width="2.2" stroke-linecap="round"/><path d="M207.1 173.5 L218.3 168.7" stroke="#0a0806" stroke-width="2.2" stroke-linecap="round"/><path d="M205.4 181.6 L196.4 172.0" stroke="#0a0806" stroke-width="2.2" stroke-linecap="round"/><path d="M205.4 181.6 L217.5 176.4" stroke="#0a0806" stroke-width="2.2" stroke-linecap="round"/><path d="M203.7 189.7 L194.0 179.4" stroke="#0a0806" stroke-width="2.2" stroke-linecap="round"/><path d="M203.7 189.7 L216.8 184.2" stroke="#0a0806" stroke-width="2.2" stroke-linecap="round"/><ellipse cx="359.1" cy="157.0" rx="2.7" ry="11.3" transform="rotate(-12.7 359.1 157.0)" fill="#0a0806" opacity="1"/><ellipse cx="361.4" cy="167.0" rx="3.5" ry="11.3" transform="rotate(-12.7 361.4 167.0)" fill="#0a0806" opacity="1"/><ellipse cx="363.6" cy="177.0" rx="2.8" ry="11.3" transform="rotate(-12.7 363.6 177.0)" fill="#0a0806" opacity="1"/><ellipse cx="365.9" cy="187.0" rx="1.9" ry="11.3" transform="rotate(-12.7 365.9 187.0)" fill="#0a0806" opacity="1"/><ellipse cx="391.4" cy="177.6" rx="2.3" ry="10.2" transform="rotate(-4.6 391.4 177.6)" fill="#0a0806" opacity="1"/><ellipse cx="392.1" cy="186.9" rx="3.0" ry="10.2" transform="rotate(-4.6 392.1 186.9)" fill="#0a0806" opacity="1"/><ellipse cx="392.9" cy="196.1" rx="2.4" ry="10.2" transform="rotate(-4.6 392.9 196.1)" fill="#0a0806" opacity="1"/><ellipse cx="393.6" cy="205.4" rx="1.7" ry="10.2" transform="rotate(-4.6 393.6 205.4)" fill="#0a0806" opacity="1"/></g><g filter="url(#v0h)"><text x="117" y="136" font-family="Liberation Serif" font-weight="700" font-size="38" fill="#0e0a06" textLength="206" lengthAdjust="spacingAndGlyphs">Senja Teduh</text><text x="242" y="156" font-family="Liberation Sans" font-weight="700" font-size="14" fill="#0e0a06" textLength="81" lengthAdjust="spacingAndGlyphs">IG @S.E.N.D.U</text><path d="M122 106 C150 98 180 102 190 112" fill="none" stroke="#0e0a06" stroke-width="1.6"/></g></svg></div>
<div class="t" style="left:874.7px;width:200px;text-align:right;top:1415.07px;font-size:20px;font-weight:700;color:#fff">8:31</div>
<div class="t" style="left:673.70px;top:1461.87px;font-size:20px;color:#050505;font-weight:700;">˚ʚ♡ɞ˚</div>
<div class="t" style="left:673.70px;top:1493.72px;font-size:19px;color:#65676b;">40 minggu yang lalu · 52 Tayangan</div>
<div class="a" style="left:1109.8px;top:1196.7px;width:422px;height:252.7px;border-radius:12px;overflow:hidden;background:#000"><svg style="left:0;top:0" width="422" height="253" viewBox="0 0 422 253"><defs><filter id="v1f" x="-20%" y="-50%" width="140%" height="200%"><feGaussianBlur stdDeviation="6"/></filter><filter id="v1g" x="-50%" y="-50%" width="200%" height="200%"><feGaussianBlur stdDeviation="3.2"/></filter><filter id="v1h" x="-50%" y="-50%" width="200%" height="200%"><feGaussianBlur stdDeviation="1"/></filter><linearGradient id="v1a" x1="0" y1="0" x2="0" y2="1"><stop offset="0" stop-color="#b3a282"/><stop offset=".18" stop-color="#bcab8a"/><stop offset=".3" stop-color="#9a8a70"/><stop offset=".4" stop-color="#b3a07c"/><stop offset=".6" stop-color="#c2a878"/><stop offset=".8" stop-color="#b89058"/><stop offset="1" stop-color="#8a6a40"/></linearGradient></defs><rect width="422" height="253" fill="url(#v1a)"/><g filter="url(#v1f)"><ellipse cx="260" cy="70" rx="160" ry="14" fill="#6e5e4a" opacity=".55"/><ellipse cx="40" cy="215" rx="60" ry="45" fill="#0a0806"/><ellipse cx="110" cy="235" rx="40" ry="25" fill="#3a2a18" opacity=".8"/><ellipse cx="330" cy="240" rx="60" ry="15" fill="#6a4a28" opacity=".6"/><ellipse cx="230" cy="190" rx="50" ry="30" fill="#e8c080" opacity=".6"/></g><g filter="url(#v1g)"><circle cx="220" cy="248" r="16" fill="#fff6e0"/></g><g filter="url(#v1h)"><ellipse cx="42.5" cy="3.3" rx="14.7" ry="19.1" transform="rotate(16.7 42.5 3.3)" fill="#0a0806" opacity="1"/><ellipse cx="37.5" cy="20.0" rx="19.6" ry="19.1" transform="rotate(16.7 37.5 20.0)" fill="#0a0806" opacity="1"/><ellipse cx="32.5" cy="36.7" rx="20.9" ry="19.1" transform="rotate(16.7 32.5 36.7)" fill="#0a0806" opacity="1"/><ellipse cx="27.5" cy="53.3" rx="18.1" ry="19.1" transform="rotate(16.7 27.5 53.3)" fill="#0a0806" opacity="1"/><ellipse cx="22.5" cy="70.0" rx="12.3" ry="19.1" transform="rotate(16.7 22.5 70.0)" fill="#0a0806" opacity="1"/><ellipse cx="17.5" cy="86.7" rx="11.6" ry="19.1" transform="rotate(16.7 17.5 86.7)" fill="#0a0806" opacity="1"/><path d="M0 0 L30 0 L0 60z" fill="#0a0806"/><path d="M180.0 150.0 L175.0 253.0" stroke="#0a0806" stroke-width="4"/><path d="M179.6 157.7 L164.1 145.7" stroke="#0a0806" stroke-width="4" stroke-linecap="round"/><path d="M179.6 157.7 L196.3 147.2" stroke="#0a0806" stroke-width="4" stroke-linecap="round"/><path d="M179.0 170.6 L161.6 157.1" stroke="#0a0806" stroke-width="4" stroke-linecap="round"/><path d="M179.0 170.6 L197.6 158.9" stroke="#0a0806" stroke-width="4" stroke-linecap="round"/><path d="M178.4 183.5 L159.2 168.6" stroke="#0a0806" stroke-width="4" stroke-linecap="round"/><path d="M178.4 183.5 L198.9 170.5" stroke="#0a0806" stroke-width="4" stroke-linecap="round"/><path d="M177.8 196.3 L156.8 180.1" stroke="#0a0806" stroke-width="4" stroke-linecap="round"/><path d="M177.8 196.3 L200.2 182.2" stroke="#0a0806" stroke-width="4" stroke-linecap="round"/><path d="M177.1 209.2 L154.3 191.6" stroke="#0a0806" stroke-width="4" stroke-linecap="round"/><path d="M177.1 209.2 L201.5 193.9" stroke="#0a0806" stroke-width="4" stroke-linecap="round"/><path d="M176.5 222.1 L151.9 203.0" stroke="#0a0806" stroke-width="4" stroke-linecap="round"/><path d="M176.5 222.1 L202.8 205.5" stroke="#0a0806" stroke-width="4" stroke-linecap="round"/><path d="M175.9 235.0 L149.5 214.5" stroke="#0a0806" stroke-width="4" stroke-linecap="round"/><path d="M175.9 235.0 L204.1 217.2" stroke="#0a0806" stroke-width="4" stroke-linecap="round"/><path d="M175.2 247.8 L147.0 226.0" stroke="#0a0806" stroke-width="4" stroke-linecap="round"/><path d="M175.2 247.8 L205.5 228.8" stroke="#0a0806" stroke-width="4" stroke-linecap="round"/></g><g filter="url(#v1h)"><text x="7" y="147" font-family="Liberation Serif" font-weight="700" font-size="74" fill="#0e0a06" textLength="407" lengthAdjust="spacingAndGlyphs">Senja Teduh</text><text x="253" y="183" font-family="Liberation Sans" font-weight="700" font-size="28" fill="#0e0a06" textLength="160" lengthAdjust="spacingAndGlyphs">IG @S.E.N.D.U</text><path d="M20 88 C60 78 110 75 130 96" fill="none" stroke="#0e0a06" stroke-width="3"/></g></svg></div>
<div class="a" style="left:1458.8px;top:1412px;width:61px;height:26px;border-radius:4px;background:rgba(40,30,20,.55)"></div>
<div class="t" style="left:1309.8px;width:200px;text-align:right;top:1415.07px;font-size:20px;font-weight:700;color:#fff">4:09</div>
<div class="t" style="left:1108.80px;top:1461.87px;font-size:20px;color:#050505;font-weight:700;">˚ʚ♡ɞ˚</div>
<div class="t" style="left:1108.80px;top:1493.72px;font-size:19px;color:#65676b;">40 minggu yang lalu · 74 Tayangan</div>
<svg style="left:1111.8px;top:1524px" width="27" height="27" viewBox="0 0 16 16"><defs><linearGradient id="lg1" x1="0" y1="0" x2="0" y2="1"><stop offset="0" stop-color="#18afff"/><stop offset="1" stop-color="#0062df"/></linearGradient></defs><circle cx="8" cy="8" r="8" fill="url(#lg1)"/><path d="M12.16 7.28c.13.15.2.34.2.56 0 .37-.23.7-.55.83.1.13.16.3.16.49 0 .38-.25.7-.6.8.05.1.08.2.08.32 0 .47-.38.84-.84.84H7.9c-.54 0-1-.12-1.5-.38V8.2c.73-.55 1.26-1.72 1.4-2.6.07-.43.25-.9.78-.9.42 0 .77.43.77 1.24 0 .56-.2 1.12-.37 1.42h2.35c.45 0 .85.38.85.86 0 .38-.24.84-.02 1.06zM4.8 8.1h.9c.3 0 .53.24.53.54v3.6c0 .3-.24.53-.53.53h-.9a.53.53 0 0 1-.53-.53v-3.6c0-.3.24-.54.53-.54z" fill="#fff"/></svg>
<div class="t" style="left:1147.80px;top:1530.02px;font-size:21px;color:#65676b;">1</div>
<div class="a" style="left:1545.9px;top:1196.7px;width:422px;height:252.7px;border-radius:12px;overflow:hidden;background:#000"><svg style="left:0;top:0" width="422" height="253" viewBox="0 0 422 253"><defs><filter id="v2f" x="-20%" y="-50%" width="140%" height="200%"><feGaussianBlur stdDeviation="6"/></filter><filter id="v2g" x="-50%" y="-50%" width="200%" height="200%"><feGaussianBlur stdDeviation="3.2"/></filter><filter id="v2h" x="-50%" y="-50%" width="200%" height="200%"><feGaussianBlur stdDeviation="1"/></filter><linearGradient id="v2a" x1="0" y1="0" x2="0" y2="1"><stop offset="0" stop-color="#6e6451"/><stop offset=".12" stop-color="#8e816b"/><stop offset=".3" stop-color="#ad9e83"/><stop offset=".42" stop-color="#b2a386"/><stop offset=".5" stop-color="#93826a"/><stop offset=".58" stop-color="#a48c68"/><stop offset=".66" stop-color="#9a7e52"/><stop offset=".72" stop-color="#5a4428"/><stop offset=".79" stop-color="#140f09"/><stop offset=".86" stop-color="#040302"/><stop offset="1" stop-color="#000"/></linearGradient><linearGradient id="v2c" x1="0" y1="0" x2="1" y2="0"><stop offset="0" stop-color="#000" stop-opacity=".28"/><stop offset=".25" stop-color="#000" stop-opacity=".05"/><stop offset=".7" stop-color="#000" stop-opacity="0"/><stop offset="1" stop-color="#000" stop-opacity=".25"/></linearGradient><radialGradient id="v2b" cx=".53" cy=".68" r=".3"><stop offset="0" stop-color="#e8b870" stop-opacity=".85"/><stop offset=".5" stop-color="#b88a50" stop-opacity=".45"/><stop offset="1" stop-color="#a87a3a" stop-opacity="0"/></radialGradient></defs><rect width="422" height="253" fill="url(#v2a)"/><rect width="422" height="253" fill="url(#v2b)"/><rect width="422" height="253" fill="url(#v2c)"/><g filter="url(#v2f)"><ellipse cx="300" cy="112" rx="130" ry="9" fill="#6e5e4a" opacity=".6"/><ellipse cx="90" cy="122" rx="110" ry="10" fill="#6e5e4a" opacity=".5"/></g><g filter="url(#v2f)"><ellipse cx="235" cy="170" rx="120" ry="20" fill="#d8a860" opacity=".55"/><ellipse cx="340" cy="150" rx="80" ry="18" fill="#c8a478" opacity=".35"/><ellipse cx="60" cy="158" rx="85" ry="16" fill="#2a2016" opacity=".55"/><ellipse cx="390" cy="170" rx="50" ry="14" fill="#2a2016" opacity=".45"/></g><g filter="url(#v2g)"><path d="M0 165 C20 158 40 170 60 162 C80 175 100 168 120 180 C150 188 170 180 200 192 L240 196 C260 188 290 194 320 184 C350 190 380 178 422 186 L422 253 L0 253z" fill="#050403"/><path d="M15 178 L22 148 L28 180z M70 174 L80 145 L86 176z M250 192 L262 165 L270 194z M300 186 L315 160 L322 188z" fill="#0a0806"/></g><g filter="url(#v2g)"><circle cx="225" cy="188" r="9" fill="#fff4d8"/></g><circle cx="225" cy="188" r="5" fill="#fffaf0" opacity=".9"/><g filter="url(#v2h)"><ellipse cx="138.0" cy="43.1" rx="6.1" ry="12.1" transform="rotate(21.3 138.0 43.1)" fill="#0a0806" opacity="1"/><ellipse cx="134.0" cy="53.4" rx="8.1" ry="12.1" transform="rotate(21.3 134.0 53.4)" fill="#0a0806" opacity="1"/><ellipse cx="130.0" cy="63.7" rx="9.0" ry="12.1" transform="rotate(21.3 130.0 63.7)" fill="#0a0806" opacity="1"/><ellipse cx="126.0" cy="74.0" rx="8.6" ry="12.1" transform="rotate(21.3 126.0 74.0)" fill="#0a0806" opacity="1"/><ellipse cx="122.0" cy="84.3" rx="6.9" ry="12.1" transform="rotate(21.3 122.0 84.3)" fill="#0a0806" opacity="1"/><ellipse cx="118.0" cy="94.6" rx="5.0" ry="12.1" transform="rotate(21.3 118.0 94.6)" fill="#0a0806" opacity="1"/><ellipse cx="114.0" cy="104.9" rx="5.0" ry="12.1" transform="rotate(21.3 114.0 104.9)" fill="#0a0806" opacity="1"/><ellipse cx="94.1" cy="92.4" rx="4.0" ry="10.0" transform="rotate(-14.0 94.1 92.4)" fill="#0a0806" opacity="1"/><ellipse cx="96.3" cy="101.2" rx="5.4" ry="10.0" transform="rotate(-14.0 96.3 101.2)" fill="#0a0806" opacity="1"/><ellipse cx="98.5" cy="110.0" rx="5.2" ry="10.0" transform="rotate(-14.0 98.5 110.0)" fill="#0a0806" opacity="1"/><ellipse cx="100.7" cy="118.8" rx="3.7" ry="10.0" transform="rotate(-14.0 100.7 118.8)" fill="#0a0806" opacity="1"/><ellipse cx="102.9" cy="127.6" rx="3.0" ry="10.0" transform="rotate(-14.0 102.9 127.6)" fill="#0a0806" opacity="1"/><path d="M112 108 L97 178" stroke="#0a0806" stroke-width="3"/><path d="M104 130 L100 170" stroke="#0a0806" stroke-width="2"/><path d="M215.0 136.0 L203.0 193.0" stroke="#0a0806" stroke-width="2.2"/><path d="M214.0 140.9 L208.5 135.1" stroke="#0a0806" stroke-width="2.2" stroke-linecap="round"/><path d="M214.0 140.9 L221.3 137.8" stroke="#0a0806" stroke-width="2.2" stroke-linecap="round"/><path d="M212.3 149.0 L206.1 142.5" stroke="#0a0806" stroke-width="2.2" stroke-linecap="round"/><path d="M212.3 149.0 L220.5 145.5" stroke="#0a0806" stroke-width="2.2" stroke-linecap="round"/><path d="M210.5 157.2 L203.7 149.8" stroke="#0a0806" stroke-width="2.2" stroke-linecap="round"/><path d="M210.5 157.2 L219.8 153.2" stroke="#0a0806" stroke-width="2.2" stroke-linecap="round"/><path d="M208.8 165.3 L201.2 157.2" stroke="#0a0806" stroke-width="2.2" stroke-linecap="round"/><path d="M208.8 165.3 L219.0 161.0" stroke="#0a0806" stroke-width="2.2" stroke-linecap="round"/><path d="M207.1 173.5 L198.8 164.6" stroke="#0a0806" stroke-width="2.2" stroke-linecap="round"/><path d="M207.1 173.5 L218.3 168.7" stroke="#0a0806" stroke-width="2.2" stroke-linecap="round"/><path d="M205.4 181.6 L196.4 172.0" stroke="#0a0806" stroke-width="2.2" stroke-linecap="round"/><path d="M205.4 181.6 L217.5 176.4" stroke="#0a0806" stroke-width="2.2" stroke-linecap="round"/><path d="M203.7 189.7 L194.0 179.4" stroke="#0a0806" stroke-width="2.2" stroke-linecap="round"/><path d="M203.7 189.7 L216.8 184.2" stroke="#0a0806" stroke-width="2.2" stroke-linecap="round"/><ellipse cx="359.1" cy="157.0" rx="2.7" ry="11.3" transform="rotate(-12.7 359.1 157.0)" fill="#0a0806" opacity="1"/><ellipse cx="361.4" cy="167.0" rx="3.5" ry="11.3" transform="rotate(-12.7 361.4 167.0)" fill="#0a0806" opacity="1"/><ellipse cx="363.6" cy="177.0" rx="2.8" ry="11.3" transform="rotate(-12.7 363.6 177.0)" fill="#0a0806" opacity="1"/><ellipse cx="365.9" cy="187.0" rx="1.9" ry="11.3" transform="rotate(-12.7 365.9 187.0)" fill="#0a0806" opacity="1"/><ellipse cx="391.4" cy="177.6" rx="2.3" ry="10.2" transform="rotate(-4.6 391.4 177.6)" fill="#0a0806" opacity="1"/><ellipse cx="392.1" cy="186.9" rx="3.0" ry="10.2" transform="rotate(-4.6 392.1 186.9)" fill="#0a0806" opacity="1"/><ellipse cx="392.9" cy="196.1" rx="2.4" ry="10.2" transform="rotate(-4.6 392.9 196.1)" fill="#0a0806" opacity="1"/><ellipse cx="393.6" cy="205.4" rx="1.7" ry="10.2" transform="rotate(-4.6 393.6 205.4)" fill="#0a0806" opacity="1"/></g><g filter="url(#v2h)"><text x="117" y="136" font-family="Liberation Serif" font-weight="700" font-size="38" fill="#0e0a06" textLength="206" lengthAdjust="spacingAndGlyphs">Senja Teduh</text><text x="242" y="156" font-family="Liberation Sans" font-weight="700" font-size="14" fill="#0e0a06" textLength="81" lengthAdjust="spacingAndGlyphs">IG @S.E.N.D.U</text><path d="M122 106 C150 98 180 102 190 112" fill="none" stroke="#0e0a06" stroke-width="1.6"/></g></svg></div>
<div class="t" style="left:1745.9px;width:200px;text-align:right;top:1415.07px;font-size:20px;font-weight:700;color:#fff">5:48</div>
<div class="t" style="left:1544.90px;top:1461.87px;font-size:20px;color:#050505;font-weight:700;">˚ʚ♡ɞ˚</div>
<div class="t" style="left:1544.90px;top:1493.72px;font-size:19px;color:#65676b;">42 minggu yang lalu · 43 Tayangan</div>
<div class="a" style="left:1981.7px;top:1196.7px;width:422px;height:252.7px;border-radius:12px;overflow:hidden;background:#000"><svg style="left:0;top:0" width="422" height="253" viewBox="0 0 422 253"><defs><filter id="v3f" x="-20%" y="-50%" width="140%" height="200%"><feGaussianBlur stdDeviation="6"/></filter><filter id="v3g" x="-50%" y="-50%" width="200%" height="200%"><feGaussianBlur stdDeviation="3.2"/></filter><filter id="v3h" x="-50%" y="-50%" width="200%" height="200%"><feGaussianBlur stdDeviation="1"/></filter><linearGradient id="v3a" x1="0" y1="0" x2="0" y2="1"><stop offset="0" stop-color="#6e6451"/><stop offset=".12" stop-color="#8e816b"/><stop offset=".3" stop-color="#ad9e83"/><stop offset=".42" stop-color="#b2a386"/><stop offset=".5" stop-color="#93826a"/><stop offset=".58" stop-color="#a48c68"/><stop offset=".66" stop-color="#9a7e52"/><stop offset=".72" stop-color="#5a4428"/><stop offset=".79" stop-color="#140f09"/><stop offset=".86" stop-color="#040302"/><stop offset="1" stop-color="#000"/></linearGradient><linearGradient id="v3c" x1="0" y1="0" x2="1" y2="0"><stop offset="0" stop-color="#000" stop-opacity=".28"/><stop offset=".25" stop-color="#000" stop-opacity=".05"/><stop offset=".7" stop-color="#000" stop-opacity="0"/><stop offset="1" stop-color="#000" stop-opacity=".25"/></linearGradient><radialGradient id="v3b" cx=".53" cy=".68" r=".3"><stop offset="0" stop-color="#e8b870" stop-opacity=".85"/><stop offset=".5" stop-color="#b88a50" stop-opacity=".45"/><stop offset="1" stop-color="#a87a3a" stop-opacity="0"/></radialGradient></defs><rect width="422" height="253" fill="url(#v3a)"/><rect width="422" height="253" fill="url(#v3b)"/><rect width="422" height="253" fill="url(#v3c)"/><g filter="url(#v3f)"><ellipse cx="300" cy="112" rx="130" ry="9" fill="#6e5e4a" opacity=".6"/><ellipse cx="90" cy="122" rx="110" ry="10" fill="#6e5e4a" opacity=".5"/></g><g filter="url(#v3f)"><ellipse cx="235" cy="170" rx="120" ry="20" fill="#d8a860" opacity=".55"/><ellipse cx="340" cy="150" rx="80" ry="18" fill="#c8a478" opacity=".35"/><ellipse cx="60" cy="158" rx="85" ry="16" fill="#2a2016" opacity=".55"/><ellipse cx="390" cy="170" rx="50" ry="14" fill="#2a2016" opacity=".45"/></g><g filter="url(#v3g)"><path d="M0 165 C20 158 40 170 60 162 C80 175 100 168 120 180 C150 188 170 180 200 192 L240 196 C260 188 290 194 320 184 C350 190 380 178 422 186 L422 253 L0 253z" fill="#050403"/><path d="M15 178 L22 148 L28 180z M70 174 L80 145 L86 176z M250 192 L262 165 L270 194z M300 186 L315 160 L322 188z" fill="#0a0806"/></g><g filter="url(#v3g)"><circle cx="225" cy="188" r="9" fill="#fff4d8"/></g><circle cx="225" cy="188" r="5" fill="#fffaf0" opacity=".9"/><g filter="url(#v3h)"><ellipse cx="138.0" cy="43.1" rx="6.1" ry="12.1" transform="rotate(21.3 138.0 43.1)" fill="#0a0806" opacity="1"/><ellipse cx="134.0" cy="53.4" rx="8.1" ry="12.1" transform="rotate(21.3 134.0 53.4)" fill="#0a0806" opacity="1"/><ellipse cx="130.0" cy="63.7" rx="9.0" ry="12.1" transform="rotate(21.3 130.0 63.7)" fill="#0a0806" opacity="1"/><ellipse cx="126.0" cy="74.0" rx="8.6" ry="12.1" transform="rotate(21.3 126.0 74.0)" fill="#0a0806" opacity="1"/><ellipse cx="122.0" cy="84.3" rx="6.9" ry="12.1" transform="rotate(21.3 122.0 84.3)" fill="#0a0806" opacity="1"/><ellipse cx="118.0" cy="94.6" rx="5.0" ry="12.1" transform="rotate(21.3 118.0 94.6)" fill="#0a0806" opacity="1"/><ellipse cx="114.0" cy="104.9" rx="5.0" ry="12.1" transform="rotate(21.3 114.0 104.9)" fill="#0a0806" opacity="1"/><ellipse cx="94.1" cy="92.4" rx="4.0" ry="10.0" transform="rotate(-14.0 94.1 92.4)" fill="#0a0806" opacity="1"/><ellipse cx="96.3" cy="101.2" rx="5.4" ry="10.0" transform="rotate(-14.0 96.3 101.2)" fill="#0a0806" opacity="1"/><ellipse cx="98.5" cy="110.0" rx="5.2" ry="10.0" transform="rotate(-14.0 98.5 110.0)" fill="#0a0806" opacity="1"/><ellipse cx="100.7" cy="118.8" rx="3.7" ry="10.0" transform="rotate(-14.0 100.7 118.8)" fill="#0a0806" opacity="1"/><ellipse cx="102.9" cy="127.6" rx="3.0" ry="10.0" transform="rotate(-14.0 102.9 127.6)" fill="#0a0806" opacity="1"/><path d="M112 108 L97 178" stroke="#0a0806" stroke-width="3"/><path d="M104 130 L100 170" stroke="#0a0806" stroke-width="2"/><path d="M215.0 136.0 L203.0 193.0" stroke="#0a0806" stroke-width="2.2"/><path d="M214.0 140.9 L208.5 135.1" stroke="#0a0806" stroke-width="2.2" stroke-linecap="round"/><path d="M214.0 140.9 L221.3 137.8" stroke="#0a0806" stroke-width="2.2" stroke-linecap="round"/><path d="M212.3 149.0 L206.1 142.5" stroke="#0a0806" stroke-width="2.2" stroke-linecap="round"/><path d="M212.3 149.0 L220.5 145.5" stroke="#0a0806" stroke-width="2.2" stroke-linecap="round"/><path d="M210.5 157.2 L203.7 149.8" stroke="#0a0806" stroke-width="2.2" stroke-linecap="round"/><path d="M210.5 157.2 L219.8 153.2" stroke="#0a0806" stroke-width="2.2" stroke-linecap="round"/><path d="M208.8 165.3 L201.2 157.2" stroke="#0a0806" stroke-width="2.2" stroke-linecap="round"/><path d="M208.8 165.3 L219.0 161.0" stroke="#0a0806" stroke-width="2.2" stroke-linecap="round"/><path d="M207.1 173.5 L198.8 164.6" stroke="#0a0806" stroke-width="2.2" stroke-linecap="round"/><path d="M207.1 173.5 L218.3 168.7" stroke="#0a0806" stroke-width="2.2" stroke-linecap="round"/><path d="M205.4 181.6 L196.4 172.0" stroke="#0a0806" stroke-width="2.2" stroke-linecap="round"/><path d="M205.4 181.6 L217.5 176.4" stroke="#0a0806" stroke-width="2.2" stroke-linecap="round"/><path d="M203.7 189.7 L194.0 179.4" stroke="#0a0806" stroke-width="2.2" stroke-linecap="round"/><path d="M203.7 189.7 L216.8 184.2" stroke="#0a0806" stroke-width="2.2" stroke-linecap="round"/><ellipse cx="359.1" cy="157.0" rx="2.7" ry="11.3" transform="rotate(-12.7 359.1 157.0)" fill="#0a0806" opacity="1"/><ellipse cx="361.4" cy="167.0" rx="3.5" ry="11.3" transform="rotate(-12.7 361.4 167.0)" fill="#0a0806" opacity="1"/><ellipse cx="363.6" cy="177.0" rx="2.8" ry="11.3" transform="rotate(-12.7 363.6 177.0)" fill="#0a0806" opacity="1"/><ellipse cx="365.9" cy="187.0" rx="1.9" ry="11.3" transform="rotate(-12.7 365.9 187.0)" fill="#0a0806" opacity="1"/><ellipse cx="391.4" cy="177.6" rx="2.3" ry="10.2" transform="rotate(-4.6 391.4 177.6)" fill="#0a0806" opacity="1"/><ellipse cx="392.1" cy="186.9" rx="3.0" ry="10.2" transform="rotate(-4.6 392.1 186.9)" fill="#0a0806" opacity="1"/><ellipse cx="392.9" cy="196.1" rx="2.4" ry="10.2" transform="rotate(-4.6 392.9 196.1)" fill="#0a0806" opacity="1"/><ellipse cx="393.6" cy="205.4" rx="1.7" ry="10.2" transform="rotate(-4.6 393.6 205.4)" fill="#0a0806" opacity="1"/></g><g filter="url(#v3h)"><text x="117" y="136" font-family="Liberation Serif" font-weight="700" font-size="38" fill="#0e0a06" textLength="206" lengthAdjust="spacingAndGlyphs">Senja Teduh</text><text x="242" y="156" font-family="Liberation Sans" font-weight="700" font-size="14" fill="#0e0a06" textLength="81" lengthAdjust="spacingAndGlyphs">IG @S.E.N.D.U</text><path d="M122 106 C150 98 180 102 190 112" fill="none" stroke="#0e0a06" stroke-width="1.6"/></g></svg></div>
<div class="t" style="left:2181.7px;width:200px;text-align:right;top:1415.07px;font-size:20px;font-weight:700;color:#fff">7:47</div>
<div class="t" style="left:1980.70px;top:1461.87px;font-size:20px;color:#050505;font-weight:700;">˚ʚ♡ɞ˚</div>
<div class="t" style="left:1980.70px;top:1493.72px;font-size:19px;color:#65676b;">40 minggu yang lalu · 68 Tayangan</div>
<svg style="left:1983.7px;top:1524px" width="27" height="27" viewBox="0 0 16 16"><defs><linearGradient id="lg3" x1="0" y1="0" x2="0" y2="1"><stop offset="0" stop-color="#18afff"/><stop offset="1" stop-color="#0062df"/></linearGradient></defs><circle cx="8" cy="8" r="8" fill="url(#lg3)"/><path d="M12.16 7.28c.13.15.2.34.2.56 0 .37-.23.7-.55.83.1.13.16.3.16.49 0 .38-.25.7-.6.8.05.1.08.2.08.32 0 .47-.38.84-.84.84H7.9c-.54 0-1-.12-1.5-.38V8.2c.73-.55 1.26-1.72 1.4-2.6.07-.43.25-.9.78-.9.42 0 .77.43.77 1.24 0 .56-.2 1.12-.37 1.42h2.35c.45 0 .85.38.85.86 0 .38-.24.84-.02 1.06zM4.8 8.1h.9c.3 0 .53.24.53.54v3.6c0 .3-.24.53-.53.53h-.9a.53.53 0 0 1-.53-.53v-3.6c0-.3.24-.54.53-.54z" fill="#fff"/></svg>
<div class="t" style="left:2019.70px;top:1530.02px;font-size:21px;color:#65676b;">1</div>
<div class="a" style="left:674.7px;top:1597px;width:422px;height:30px;border-radius:12px;background:#1a1612"></div>
<div class="a" style="left:1109.8px;top:1597px;width:422px;height:30px;border-radius:12px;background:#1a1612"></div>
<div class="a" style="left:540px;top:84px;width:1998px;height:90px;background:#fff;box-shadow:0 1px 2px rgba(0,0,0,.12)"></div>
<div class="a" style="left:674px;top:99px;width:60px;height:60px;border-radius:50%;overflow:hidden"><svg style="left:0;top:0" width="60" height="60" viewBox="0 0 100 100"><defs><linearGradient id="av60" x1="0" y1="0" x2="0" y2="1"><stop offset="0" stop-color="#8c8068"/><stop offset=".15" stop-color="#a89a80"/><stop offset=".35" stop-color="#b2a486"/><stop offset=".45" stop-color="#7e6e58"/><stop offset=".58" stop-color="#8a7658"/><stop offset=".66" stop-color="#6a5436"/><stop offset=".74" stop-color="#1e160c"/><stop offset=".82" stop-color="#070504"/><stop offset="1" stop-color="#000"/></linearGradient><radialGradient id="avs60" cx=".53" cy=".72" r=".22"><stop offset="0" stop-color="#fff0c8"/><stop offset=".2" stop-color="#e8c070" stop-opacity=".7"/><stop offset="1" stop-color="#c8963c" stop-opacity="0"/></radialGradient><filter id="avf60" x="-20%" y="-20%" width="140%" height="140%"><feGaussianBlur stdDeviation="0.7"/></filter></defs><rect width="100" height="100" fill="url(#av60)"/><rect width="100" height="100" fill="url(#avs60)"/><g filter="url(#avf60)"><path d="M24 20 C18 30 12 45 8 55 L14 58 C20 45 24 32 24 20z" fill="#15100a"/><text x="14" y="58" font-family="Liberation Serif" font-weight="700" font-size="17" fill="#0e0a06" textLength="74" lengthAdjust="spacingAndGlyphs">Senja Teduh</text><text x="58" y="66" font-family="Liberation Sans" font-size="6" fill="#1a120a">IG @SENDU</text></g></svg></div>
<div class="t" style="left:752.00px;top:118.51px;font-size:25.5px;color:#050505;-webkit-text-stroke:0.5px #050505;">Senja Teduh</div>
<div class="a" style="left:2357px;top:102px;width:72px;height:54px;border-radius:9px;background:#e4e6eb"></div>
<div class="a" style="left:2383.3px;top:125.5px;width:6px;height:6px;border-radius:50%;background:#050505"></div>
<div class="a" style="left:2390.8px;top:125.5px;width:6px;height:6px;border-radius:50%;background:#050505"></div>
<div class="a" style="left:2398.3px;top:125.5px;width:6px;height:6px;border-radius:50%;background:#050505"></div>
<div class="a" style="left:0;top:84px;width:540px;height:1516px;background:#fff;box-shadow:1px 0 1px rgba(0,0,0,.1)"></div>
<div class="t" style="left:24.00px;top:109.98px;font-size:35.7px;color:#050505;font-weight:700;">Kelola Halaman</div>
<div class="a" style="left:462px;top:100px;width:54px;height:54px;border-radius:50%;background:#e4e6eb"></div>
<svg style="left:475px;top:113px" width="28" height="28" viewBox="0 0 28 28"><rect x="2.5" y="2.5" width="23" height="23" rx="4" fill="none" stroke="#050505" stroke-width="2.2"/><path d="M10 2.5v23" stroke="#050505" stroke-width="2.2"/><path d="M2.5 2.5h8v23h-8z" fill="#050505"/><path d="M19.5 10.5v7l-4.5-3.5z" fill="#050505"/><path d="M5 7h3M5 11h3" stroke="#fff" stroke-width="1.4"/></svg>
<div class="a" style="left:24px;top:170px;width:72px;height:72px;border-radius:50%;overflow:hidden"><svg style="left:0;top:0" width="72" height="72" viewBox="0 0 100 100"><defs><linearGradient id="av72" x1="0" y1="0" x2="0" y2="1"><stop offset="0" stop-color="#8c8068"/><stop offset=".15" stop-color="#a89a80"/><stop offset=".35" stop-color="#b2a486"/><stop offset=".45" stop-color="#7e6e58"/><stop offset=".58" stop-color="#8a7658"/><stop offset=".66" stop-color="#6a5436"/><stop offset=".74" stop-color="#1e160c"/><stop offset=".82" stop-color="#070504"/><stop offset="1" stop-color="#000"/></linearGradient><radialGradient id="avs72" cx=".53" cy=".72" r=".22"><stop offset="0" stop-color="#fff0c8"/><stop offset=".2" stop-color="#e8c070" stop-opacity=".7"/><stop offset="1" stop-color="#c8963c" stop-opacity="0"/></radialGradient><filter id="avf72" x="-20%" y="-20%" width="140%" height="140%"><feGaussianBlur stdDeviation="0.7"/></filter></defs><rect width="100" height="100" fill="url(#av72)"/><rect width="100" height="100" fill="url(#avs72)"/><g filter="url(#avf72)"><path d="M24 20 C18 30 12 45 8 55 L14 58 C20 45 24 32 24 20z" fill="#15100a"/><text x="14" y="58" font-family="Liberation Serif" font-weight="700" font-size="17" fill="#0e0a06" textLength="74" lengthAdjust="spacingAndGlyphs">Senja Teduh</text><text x="58" y="66" font-family="Liberation Sans" font-size="6" fill="#1a120a">IG @SENDU</text></g></svg></div>
<div class="t" style="left:114.00px;top:194.81px;font-size:25.5px;color:#050505;-webkit-text-stroke:0.3px #050505;">Senja Teduh</div>
<div class="a" style="left:24px;top:265.5px;width:492px;height:1.5px;background:#ced0d4"></div>
<svg style="left:24px;top:293.8px" width="36" height="36" viewBox="0 0 36 36"><rect x="1.8" y="1.6" width="32.4" height="32.6" rx="6" fill="none" stroke="#1c1e21" stroke-width="1.6"/><path d="M6.4 29.6V20c0-1 .8-1.8 1.8-1.8h6.2V29.6zM14.4 29.6V8.2c0-1 .8-1.8 1.8-1.8h3.8c1 0 1.8.8 1.8 1.8V29.6zM22 29.6V12.8c0-1 .8-1.8 1.8-1.8h4.2c1 0 1.8.8 1.8 1.8v15c0 1-.8 1.8-1.8 1.8H8.2c-1 0-1.8-.8-1.8-1.8" fill="none" stroke="#1c1e21" stroke-width="1.6" stroke-linejoin="round"/></svg>
<div class="t" style="left:78.60px;top:300.61px;font-size:25.5px;color:#050505;-webkit-text-stroke:0.2px #050505;">Dasbor Profesional</div>
<svg style="left:24px;top:360px" width="36" height="36" viewBox="0 0 36 36"><rect x="0.8" y="0.6" width="34.6" height="34.6" rx="5" fill="none" stroke="#1c1e21" stroke-width="1.6"/><circle cx="9.1" cy="8.9" r="2.8" fill="#1c1e21"/><path d="M16.7 6.7h13.1M16.7 11.1h13.1" stroke="#1c1e21" stroke-width="1.6"/><path d="M8.7 16.5l8 18.8M10.3 17.6c3-2.2 6.6.8 9.8-.8 1.8-.8 3.6-.9 4.4-.9-.4 2.6-1 4.6.5 6.6 1.2 1.6 3 3.5 4.8 4.8-2.6.9-4.5.3-6.4-.5-2.4-1-5.8-.3-8.3 1.6" fill="none" stroke="#1c1e21" stroke-width="1.6" stroke-linejoin="round"/></svg>
<div class="t" style="left:78.60px;top:366.81px;font-size:25.5px;color:#050505;-webkit-text-stroke:0.2px #050505;">Insight</div>
<svg style="left:24px;top:426px" width="36" height="36" viewBox="0 0 36 36"><path d="M8.4 11H6c-2.3 0-4.2 2-4.2 4.5S3.7 20.1 6 20.1h2.4zM8.4 11H21c2 0 4-.8 5.8-2.2l4.4-3.4c1-.8 2.6-.1 2.6 1.2v18.7c0 1.3-1.6 2-2.6 1.2l-4.4-3.4c-1.8-1.4-3.8-2.1-5.8-2.1H8.4zM8.2 20.1l1.5 10c.1.7.7 1.2 1.4 1.2h3.4c.9 0 1.5-.7 1.5-1.5V20.1" fill="none" stroke="#1c1e21" stroke-width="1.6" stroke-linejoin="round"/></svg>
<div class="t" style="left:78.60px;top:433.01px;font-size:25.5px;color:#050505;-webkit-text-stroke:0.2px #050505;">Pusat Iklan</div>
<svg style="left:24px;top:492px" width="36" height="36" viewBox="0 0 36 36"><path d="M20 1.4H7.8c-3.3 0-6 2.7-6 6v20.6c0 3.3 2.7 6 6 6h20.4c3.3 0 6-2.7 6-6V15.2" fill="none" stroke="#1c1e21" stroke-width="1.6" stroke-linecap="round"/><path d="M9.5 26.5v-4.2L29.6 2.2c.8-.8 2-.8 2.8 0l1.4 1.4c.8.8.8 2 0 2.8L13.7 26.5zM26.8 5l4.2 4.2" fill="none" stroke="#1c1e21" stroke-width="1.6" stroke-linejoin="round"/></svg>
<div class="t" style="left:78.60px;top:499.21px;font-size:25.5px;color:#050505;-webkit-text-stroke:0.2px #050505;">Buat iklan</div>
<svg style="left:24px;top:558px" width="36" height="36" viewBox="0 0 36 36"><rect x="1.9" y="1.8" width="32.2" height="32.2" rx="8.6" fill="none" stroke="#1c1e21" stroke-width="2.3"/><circle cx="17.8" cy="17.8" r="7.6" fill="none" stroke="#1c1e21" stroke-width="2.3"/><circle cx="26.5" cy="9.1" r="1.8" fill="#1c1e21"/></svg>
<div class="t" style="left:78.60px;top:565.41px;font-size:25.5px;color:#050505;-webkit-text-stroke:0.2px #050505;">Promosikan postingan Instagram</div>
<svg style="left:24px;top:624px" width="36" height="36" viewBox="0 0 36 36"><path d="M13.21 6.17 L14.78 0.97 L20.82 0.97 L22.39 6.17 L22.85 6.36 L27.63 3.79 L31.91 8.07 L29.34 12.85 L29.53 13.31 L34.73 14.88 L34.73 20.92 L29.53 22.49 L29.34 22.95 L31.91 27.73 L27.63 32.01 L22.85 29.44 L22.39 29.63 L20.82 34.83 L14.78 34.83 L13.21 29.63 L12.75 29.44 L7.97 32.01 L3.69 27.73 L6.26 22.95 L6.07 22.49 L0.87 20.92 L0.87 14.88 L6.07 13.31 L6.26 12.85 L3.69 8.07 L7.97 3.79 L12.75 6.36Z" fill="none" stroke="#1c1e21" stroke-width="1.6" stroke-linejoin="round"/><circle cx="17.8" cy="17.9" r="6.9" fill="none" stroke="#1c1e21" stroke-width="1.6"/></svg>
<div class="t" style="left:78.60px;top:631.61px;font-size:25.5px;color:#050505;-webkit-text-stroke:0.2px #050505;">Pengaturan</div>
<svg style="left:24px;top:789px" width="36" height="36" viewBox="0 0 36 36"><path d="M18.00 0.40 L21.93 3.32 L26.80 2.76 L28.75 7.25 L33.24 9.20 L32.68 14.07 L35.60 18.00 L32.68 21.93 L33.24 26.80 L28.75 28.75 L26.80 33.24 L21.93 32.68 L18.00 35.60 L14.07 32.68 L9.20 33.24 L7.25 28.75 L2.76 26.80 L3.32 21.93 L0.40 18.00 L3.32 14.07 L2.76 9.20 L7.25 7.25 L9.20 2.76 L14.07 3.32 L18.00 0.40Z" fill="none" stroke="#1c1e21" stroke-width="1.6" stroke-linejoin="round"/><path d="M9.9 17.4l5.2 6.6L26.1 12.8" fill="none" stroke="#1c1e21" stroke-width="2.3"/></svg>
<div class="t" style="left:78.60px;top:795.21px;font-size:25.5px;color:#050505;-webkit-text-stroke:0.2px #050505;">Verifikasi Meta</div>
<svg style="left:24px;top:859.6px" width="36" height="36" viewBox="0 0 36 36"><rect x="0.8" y="1" width="34.6" height="25.2" rx="3" fill="none" stroke="#1c1e21" stroke-width="1.6"/><circle cx="12.3" cy="9.6" r="4" fill="none" stroke="#1c1e21" stroke-width="1.6"/><path d="M5.6 26.2v-3c0-3.7 3-6.2 6.7-6.2s6.7 2.5 6.7 6.2v3" fill="none" stroke="#1c1e21" stroke-width="1.6"/><path d="M22.6 8.6h8.8M22.6 12.6h8.8M22.6 17.4h5.8" stroke="#1c1e21" stroke-width="1.6"/></svg>
<div class="t" style="left:78.60px;top:861.41px;font-size:25.5px;color:#050505;-webkit-text-stroke:0.2px #050505;">Pusat Prospek</div>
<svg style="left:24px;top:921px" width="36" height="36" viewBox="0 0 36 36"><path d="M10.6 3.6A16.6 16.6 0 1 1 5.8 29.8" fill="none" stroke="#1c1e21" stroke-width="2.3"/><path d="M3.6 25.5A16.6 16.6 0 0 1 6.5 8.2" fill="none" stroke="#1c1e21" stroke-width="2.3"/><path d="M6.6 7.6l12.6 12.3L5.8 31.6" fill="none" stroke="#1c1e21" stroke-width="2.3" stroke-linejoin="miter"/></svg>
<div class="t" style="left:78.60px;top:927.61px;font-size:25.5px;color:#050505;-webkit-text-stroke:0.2px #050505;">Meta Business Suite</div>
<div class="t" style="left:24.50px;top:703.21px;font-size:25.5px;color:#050505;-webkit-text-stroke:0.5px #050505;">Fitur Lainnya</div>
<div class="t" style="left:24.00px;top:737.45px;font-size:22.5px;color:#65676b;">Kelola bisnis Anda di seluruh aplikasi Meta.</div>
<svg style="left:494px;top:705px" width="20" height="14" viewBox="0 0 20 14"><path d="M3.5 11L10 4.5l6.5 6.5" fill="none" stroke="#050505" stroke-width="2.6" stroke-linecap="round"/></svg>
<svg style="left:494px;top:860px" width="20" height="20" viewBox="0 0 20 20"><path d="M4 16L16.5 3.5M7 3.5h9.5V13" fill="none" stroke="#1c1e21" stroke-width="2.2" stroke-linecap="round" stroke-linejoin="round"/></svg>
<svg style="left:494px;top:926px" width="20" height="20" viewBox="0 0 20 20"><path d="M4 16L16.5 3.5M7 3.5h9.5V13" fill="none" stroke="#1c1e21" stroke-width="2.2" stroke-linecap="round" stroke-linejoin="round"/></svg>
<div class="a" style="left:445.8px;top:923px;width:28.5px;height:28.5px;border-radius:50%;background:#e4f3fb"></div>
<div class="t" style="left:454.50px;top:927.62px;font-size:21px;color:#1d5fd1;-webkit-text-stroke:0.4px #1d5fd1;">6</div>
<div class="a" style="left:24px;top:1497.5px;width:492px;height:1.5px;background:#ced0d4"></div>
<div class="a" style="left:24px;top:1523px;width:492px;height:54px;border-radius:9px;background:#2c64f2"></div>
<svg style="left:202px;top:1539px" width="26" height="24" viewBox="0 0 26 24"><path d="M2 6.2c0-1 .8-1.6 1.7-1.6H12c2.2 0 4.2-.9 6-2.4L21.2.4c.8-.5 1.6 0 1.6.9v17.6c0 .9-.9 1.4-1.6.9L18 17.4c-1.8-1.4-3.8-2-6-2H10.6l.8 4.6c.1.8-.5 1.6-1.3 1.6H8.4c-.7 0-1.2-.5-1.3-1.1L6.3 15.4H3.7c-.9 0-1.7-.7-1.7-1.6z" fill="#fff"/></svg>
<div class="t" style="left:236.80px;top:1541.05px;font-size:22.5px;color:#fff;-webkit-text-stroke:0.6px #fff;">Buat Iklan</div>
<div class="a" style="left:540px;top:84px;width:8px;height:1516px;background:linear-gradient(to right,rgba(0,0,0,.045),rgba(0,0,0,0))"></div>
<div class="a" style="left:0;top:84px;width:2538px;height:8px;background:linear-gradient(rgba(0,0,0,.045),rgba(0,0,0,0))"></div>
<div class="a" style="left:0;top:0;width:2538px;height:84px;background:#fff;box-shadow:0 1px 2px rgba(0,0,0,.1)"></div>
<svg style="left:24px;top:12px" width="60" height="60" viewBox="0 0 36 36"><circle cx="18" cy="18" r="18" fill="#2c64f2"/><path d="M13.4 36V23.4H9.7v-5.5h3.7v-4.4c0-4.5 2.6-6.9 6.8-6.9 2.1 0 5.4.3 6.1.4v5.1h-3c-2.3 0-3.1 1.3-3.1 3.3v2.5h5.8l-.7 5.5h-5.1V36z" fill="#fff"/></svg>
<div class="a" style="left:96px;top:12px;width:420px;height:60px;border-radius:30px;background:#f0f2f5"></div>
<svg style="left:113px;top:30px" width="26" height="26" viewBox="0 0 26 26"><circle cx="10.5" cy="10.5" r="7.6" fill="none" stroke="#65676b" stroke-width="2.4"/><path d="M16 16l6.5 6.5" stroke="#65676b" stroke-width="2.6" stroke-linecap="round"/></svg>
<div class="t" style="left:150.00px;top:32.05px;font-size:22.5px;color:#65676b;">Cari di Facebook</div>
<svg style="left:941px;top:23px" width="36" height="36" viewBox="0 0 36 36"><path d="M18 3.5c-.7 0-1.3.2-1.9.7L5.1 12.6c-1.6 1.2-2.5 3-2.5 5v12.2c0 2.6 1.7 4.3 4.3 4.3h22.2c2.6 0 4.3-1.7 4.3-4.3V17.6c0-2-.9-3.8-2.5-5L19.9 4.2c-.6-.5-1.2-.7-1.9-.7z" fill="none" stroke="#65676b" stroke-width="2.6"/><path d="M13.3 34V22.4c0-1.6 1.3-2.9 2.9-2.9h3.6c1.6 0 2.9 1.3 2.9 2.9V34" fill="none" stroke="#65676b" stroke-width="2.6"/></svg>
<svg style="left:1148px;top:23px" width="36" height="36" viewBox="0 0 36 36"><path d="M8.8 34.8L4.2 5h25.4c.9 0 1.5.9 1.2 1.7l-2.9 8.3 2.9 7.6c.3.9-.3 1.7-1.2 1.7H7.4" fill="none" stroke="#65676b" stroke-width="2.6" stroke-linecap="round" stroke-linejoin="round"/></svg>
<svg style="left:1354px;top:23px" width="36" height="36" viewBox="0 0 36 36"><rect x="3" y="3" width="31" height="31" rx="8" fill="none" stroke="#65676b" stroke-width="2.6"/><path d="M9.4 27.9V18c0-.5.4-.9.9-.9h4.1V27.9zM14.4 27.9V10c0-.5.4-.9.9-.9h3.8c.5 0 .9.4.9.9V27.9zM20 27.9V14c0-.5.4-.9.9-.9h4.2c.5 0 .9.4.9.9v13c0 .5-.4.9-.9.9z" fill="none" stroke="#65676b" stroke-width="2.6" stroke-linejoin="round"/></svg>
<svg style="left:1560px;top:23px" width="36" height="36" viewBox="0 0 36 36"><path d="M9 10.6h9.4c2.2 0 4.3-.6 6.2-1.7l6.5-3.8c.9-.5 1.9.1 1.9 1.1v21.6c0 1-1 1.6-1.9 1.1l-6.5-3.8c-1.9-1.1-4-1.6-6.2-1.6H9c-3.4 0-6-2.6-6-6.4s2.6-6.5 6-6.5zM9.4 23.9l1.5 9.3c.2 1 1 1.8 2 1.8s1.9-.8 1.9-1.8v-9.3" fill="none" stroke="#65676b" stroke-width="2.6" stroke-linejoin="round"/></svg>
<div class="a" style="left:2238px;top:12px;width:60px;height:60px;border-radius:50%;background:#e4e6eb"></div>
<div class="a" style="left:2310px;top:12px;width:60px;height:60px;border-radius:50%;background:#e4e6eb"></div>
<div class="a" style="left:2382px;top:12px;width:60px;height:60px;border-radius:50%;background:#e4e6eb"></div>
<div class="a" style="left:2254.2px;top:28.2px;width:7.6px;height:7.6px;border-radius:2.2px;background:#050505"></div>
<div class="a" style="left:2264.2px;top:28.2px;width:7.6px;height:7.6px;border-radius:2.2px;background:#050505"></div>
<div class="a" style="left:2274.2px;top:28.2px;width:7.6px;height:7.6px;border-radius:2.2px;background:#050505"></div>
<div class="a" style="left:2254.2px;top:38.2px;width:7.6px;height:7.6px;border-radius:2.2px;background:#050505"></div>
<div class="a" style="left:2264.2px;top:38.2px;width:7.6px;height:7.6px;border-radius:2.2px;background:#050505"></div>
<div class="a" style="left:2274.2px;top:38.2px;width:7.6px;height:7.6px;border-radius:2.2px;background:#050505"></div>
<div class="a" style="left:2254.2px;top:48.2px;width:7.6px;height:7.6px;border-radius:2.2px;background:#050505"></div>
<div class="a" style="left:2264.2px;top:48.2px;width:7.6px;height:7.6px;border-radius:2.2px;background:#050505"></div>
<div class="a" style="left:2274.2px;top:48.2px;width:7.6px;height:7.6px;border-radius:2.2px;background:#050505"></div>
<svg style="left:2324px;top:27px" width="32" height="32" viewBox="0 0 32 32"><path d="M16 0.9C8 0.9 1.8 6.9 1.8 14.9c0 3.3 1 6.2 2.8 8.5L3.3 28.3c-.2.7.4 1.2 1 .9l5.3-1.6C11.6 28.4 13.7 28.9 16 28.9c8 0 14.1-6 14.1-14S24 0.9 16 0.9z" fill="#050505"/><path d="M7.6 19.4l4.2-6.5c.6-.9 1.9-1.2 2.8-.5l3.4 2.5c.3.2.7.2 1 0l4.5-3.4c.6-.5 1.4.2 1 .9L20.3 18.8c-.6.9-1.9 1.2-2.8.5l-3.4-2.5c-.3-.2-.7-.2-1 0l-4.5 3.4c-.6.5-1.4-.2-1-.8z" fill="#e4e6eb"/></svg>
<svg style="left:2397px;top:27px" width="30" height="31" viewBox="0 0 30 31"><path d="M15 .4C9.2 .4 5.2 5.2 5.2 11V16.6C5.2 17.5 4.9 18.3 4.3 19L2.1 21.4C1.2 22.5 1.9 24.2 3.3 24.2H26.7C28.1 24.2 28.8 22.5 27.9 21.4L25.7 19C25.1 18.3 24.8 17.5 24.8 16.6V11C24.8 5.2 20.8 .4 15 .4z" fill="#050505"/><path d="M10.2 24.1a4.3 5 0 0 0 8.6 0z" fill="#050505"/><path d="M12.1 24.1a2.4 2.9 0 0 0 4.8 0z" fill="#e4e6eb"/></svg>
<div class="a" style="left:2349px;top:3.1px;width:29px;height:29px;border-radius:50%;background:#cc393c"></div>
<div class="t" style="left:2349px;top:7.5px;width:29px;text-align:center;font-size:20px;font-weight:700;color:#fff">3</div>
<div class="a" style="left:2454px;top:12px;width:60px;height:60px;border-radius:50%;overflow:hidden"><svg style="left:0;top:0" width="60" height="60" viewBox="0 0 100 100"><defs><linearGradient id="av60" x1="0" y1="0" x2="0" y2="1"><stop offset="0" stop-color="#8c8068"/><stop offset=".15" stop-color="#a89a80"/><stop offset=".35" stop-color="#b2a486"/><stop offset=".45" stop-color="#7e6e58"/><stop offset=".58" stop-color="#8a7658"/><stop offset=".66" stop-color="#6a5436"/><stop offset=".74" stop-color="#1e160c"/><stop offset=".82" stop-color="#070504"/><stop offset="1" stop-color="#000"/></linearGradient><radialGradient id="avs60" cx=".53" cy=".72" r=".22"><stop offset="0" stop-color="#fff0c8"/><stop offset=".2" stop-color="#e8c070" stop-opacity=".7"/><stop offset="1" stop-color="#c8963c" stop-opacity="0"/></radialGradient><filter id="avf60" x="-20%" y="-20%" width="140%" height="140%"><feGaussianBlur stdDeviation="0.7"/></filter></defs><rect width="100" height="100" fill="url(#av60)"/><rect width="100" height="100" fill="url(#avs60)"/><g filter="url(#avf60)"><path d="M24 20 C18 30 12 45 8 55 L14 58 C20 45 24 32 24 20z" fill="#15100a"/><text x="14" y="58" font-family="Liberation Serif" font-weight="700" font-size="17" fill="#0e0a06" textLength="74" lengthAdjust="spacingAndGlyphs">Senja Teduh</text><text x="58" y="66" font-family="Liberation Sans" font-size="6" fill="#1a120a">IG @SENDU</text></g></svg></div>
<div class="a" style="left:2492px;top:50px;width:24px;height:24px;border-radius:50%;background:#fff"></div>
<div class="a" style="left:2494px;top:52px;width:20px;height:20px;border-radius:50%;background:#e4e6eb"></div>
<svg style="left:2497px;top:55px" width="14" height="14" viewBox="0 0 14 14"><path d="M3 5.5l4 4 4-4" fill="none" stroke="#050505" stroke-width="1.8" stroke-linecap="round"/></svg>
<div class="a" style="left:2538px;top:0;width:22px;height:1600px;background:#f9f9f9"></div>
<svg style="left:2538px;top:0" width="22" height="22" viewBox="0 0 22 22"><path d="M5.2 16L11.5 7.6 17.8 16z" fill="#8c8c8c" stroke="#8c8c8c" stroke-width="1.6" stroke-linejoin="round"/></svg>
<svg style="left:2538px;top:1578px" width="22" height="22" viewBox="0 0 22 22"><path d="M5.2 7.8L11.5 16.2 17.8 7.8z" fill="#8c8c8c" stroke="#8c8c8c" stroke-width="1.6" stroke-linejoin="round"/></svg>
<div class="a" style="left:2543px;top:732px;width:13px;height:329px;border-radius:6.5px;background:#686868"></div>
<div class="a" style="left:2558.8px;top:854px;width:2px;height:24px;background:#000"></div>
</body></html>
